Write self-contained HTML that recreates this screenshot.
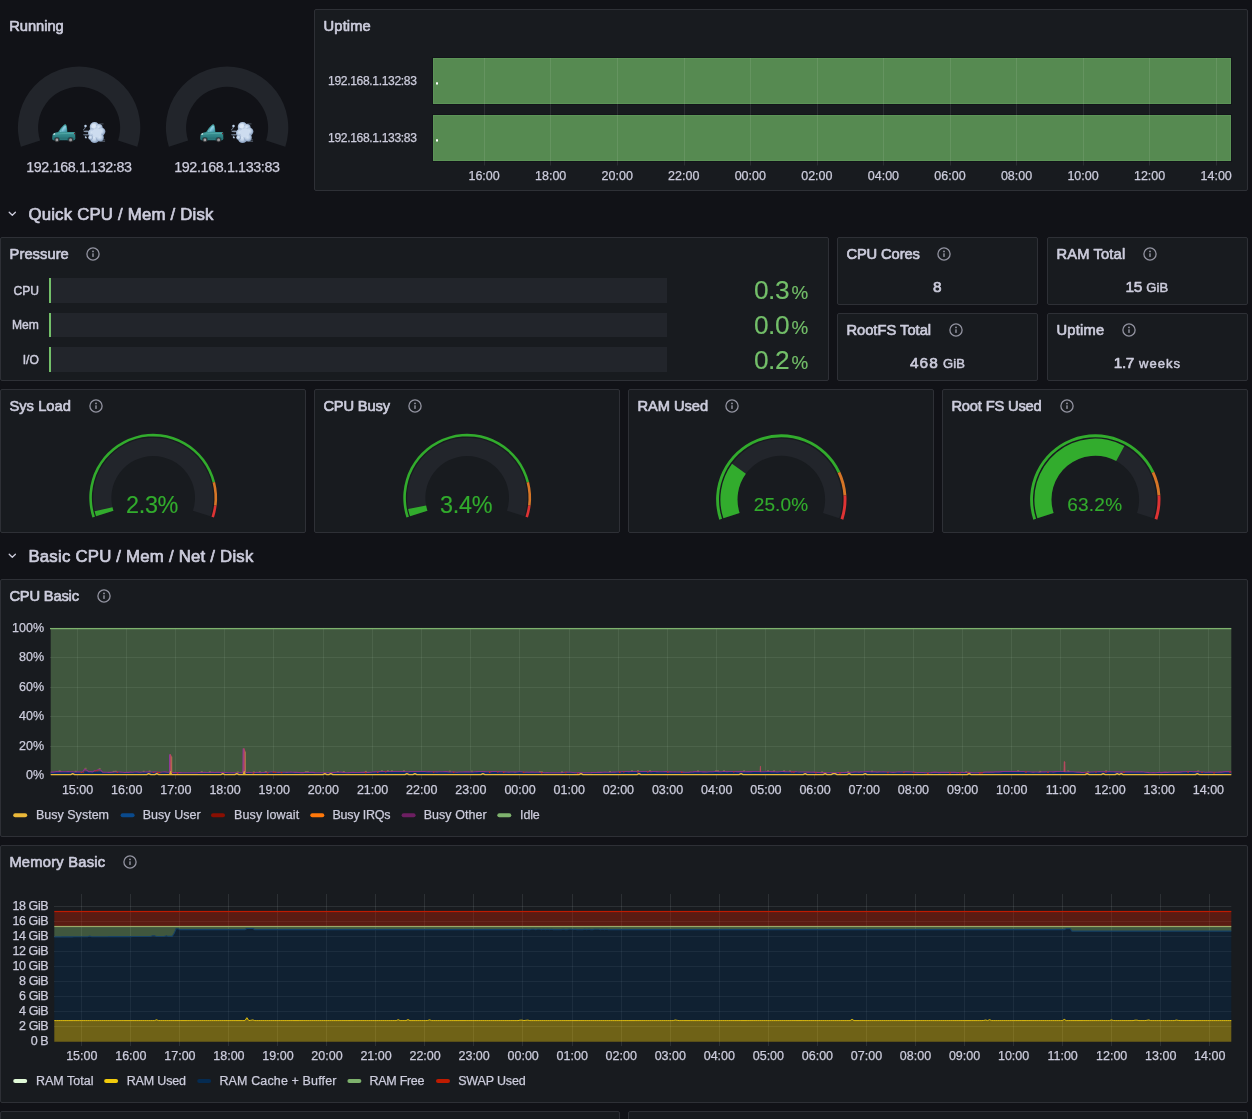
<!DOCTYPE html>
<html lang="en"><head><meta charset="utf-8"><title>Node Exporter Full</title>
<style>
html,body{margin:0;padding:0;background:#111217}
html{overflow:hidden}
body{width:1252px;height:1119px;font-family:"Liberation Sans",sans-serif;color:#ccccdc}
#root{position:relative;width:1252px;height:1119px;overflow:hidden;background:#111217}
.p{position:absolute;background:#181b1f;border:1px solid #2e3036;border-radius:2px}
.t{position:absolute;white-space:pre;display:block}
.a{position:absolute}
#v{position:absolute;left:0;top:0;will-change:transform}
</style></head><body>
<div id="root">
<div class="p" style="left:314px;top:9px;width:932px;height:180px"></div>
<div class="p" style="left:0px;top:237px;width:827px;height:142px"></div>
<div class="p" style="left:837px;top:237px;width:199px;height:66px"></div>
<div class="p" style="left:1047px;top:237px;width:199px;height:66px"></div>
<div class="p" style="left:837px;top:313px;width:199px;height:66px"></div>
<div class="p" style="left:1047px;top:313px;width:199px;height:66px"></div>
<div class="p" style="left:0px;top:389px;width:304px;height:142px"></div>
<div class="p" style="left:314px;top:389px;width:304px;height:142px"></div>
<div class="p" style="left:628px;top:389px;width:304px;height:142px"></div>
<div class="p" style="left:942px;top:389px;width:304px;height:142px"></div>
<div class="p" style="left:0px;top:579px;width:1246px;height:256px"></div>
<div class="p" style="left:0px;top:845px;width:1246px;height:256px"></div>
<div class="p" style="left:0px;top:1111px;width:618px;height:58px"></div>
<div class="p" style="left:628px;top:1111px;width:618px;height:58px"></div>
<svg id="v" width="1252" height="1119" viewBox="0 0 1252 1119">
<defs>
<linearGradient id="tb" x1="0" y1="0" x2="0" y2="1"><stop offset="0" stop-color="#4fa9a9"/><stop offset=".45" stop-color="#3f9a9b"/><stop offset=".75" stop-color="#2f8285"/><stop offset="1" stop-color="#2a767a"/></linearGradient>
<linearGradient id="tw" x1="0" y1="0" x2="1" y2="1"><stop offset="0" stop-color="#4aa3b6"/><stop offset=".5" stop-color="#8fd0e4"/><stop offset="1" stop-color="#3c8fa6"/></linearGradient>
<radialGradient id="pg" cx=".45" cy=".42" r=".6"><stop offset="0" stop-color="#d9e6f5"/><stop offset=".5" stop-color="#bccee5"/><stop offset="1" stop-color="#7d93b3"/></radialGradient>
<filter id="pf" x="-20%" y="-20%" width="140%" height="140%"><feGaussianBlur stdDeviation=".55"/></filter>
<filter id="tf" x="-10%" y="-10%" width="120%" height="120%"><feGaussianBlur stdDeviation=".28"/></filter>
</defs>
<path d="M20.90 146.71A61.20 61.20 0 1 1 137.30 146.71L118.09 140.47A41.00 41.00 0 1 0 40.11 140.47Z" fill="#22252b"/>
<path d="M168.90 146.71A61.20 61.20 0 1 1 285.30 146.71L266.09 140.47A41.00 41.00 0 1 0 188.11 140.47Z" fill="#22252b"/>
<rect x="432.5" y="57.5" width="799" height="47" fill="none" stroke="#13141a" stroke-opacity=".85" stroke-width="1"/>
<rect x="433" y="58" width="798" height="46" fill="rgb(86,138,81)"/>
<rect x="433.5" y="58.5" width="797" height="45" fill="none" stroke="rgb(92,148,87)" stroke-width="1"/>
<rect x="432.5" y="114.5" width="799" height="47" fill="none" stroke="#13141a" stroke-opacity=".85" stroke-width="1"/>
<rect x="433" y="115" width="798" height="46" fill="rgb(86,138,81)"/>
<rect x="433.5" y="115.5" width="797" height="45" fill="none" stroke="rgb(92,148,87)" stroke-width="1"/>
<rect x="484" y="58" width="1" height="107.5" fill="#fff" fill-opacity=".09"/>
<rect x="550" y="58" width="1" height="107.5" fill="#fff" fill-opacity=".09"/>
<rect x="617" y="58" width="1" height="107.5" fill="#fff" fill-opacity=".09"/>
<rect x="684" y="58" width="1" height="107.5" fill="#fff" fill-opacity=".09"/>
<rect x="750" y="58" width="1" height="107.5" fill="#fff" fill-opacity=".09"/>
<rect x="817" y="58" width="1" height="107.5" fill="#fff" fill-opacity=".09"/>
<rect x="883" y="58" width="1" height="107.5" fill="#fff" fill-opacity=".09"/>
<rect x="950" y="58" width="1" height="107.5" fill="#fff" fill-opacity=".09"/>
<rect x="1016" y="58" width="1" height="107.5" fill="#fff" fill-opacity=".09"/>
<rect x="1083" y="58" width="1" height="107.5" fill="#fff" fill-opacity=".09"/>
<rect x="1149" y="58" width="1" height="107.5" fill="#fff" fill-opacity=".09"/>
<rect x="1216" y="58" width="1" height="107.5" fill="#fff" fill-opacity=".09"/>
<rect x="436" y="82.3" width="2" height="2.2" fill="#fff"/><rect x="436" y="139.3" width="2" height="2.2" fill="#fff"/>
<path d="M9.2 212.2l3.1 3.1 3.1-3.1" fill="none" stroke="#ccccdc" stroke-width="1.3" stroke-linecap="round" stroke-linejoin="round"/>
<path d="M9.2 554.2l3.1 3.1 3.1-3.1" fill="none" stroke="#ccccdc" stroke-width="1.3" stroke-linecap="round" stroke-linejoin="round"/>
<rect x="51" y="278" width="616" height="25" fill="#22252b"/>
<rect x="49" y="278" width="2" height="25" fill="#73bf69"/>
<rect x="51" y="313" width="616" height="24" fill="#22252b"/>
<rect x="49" y="313" width="2" height="24" fill="#73bf69"/>
<rect x="51" y="347" width="616" height="25" fill="#22252b"/>
<rect x="49" y="347" width="2" height="25" fill="#73bf69"/>
<path d="M96.04 516.37A60.10 60.10 0 1 1 210.36 516.37L192.95 510.72A41.80 41.80 0 1 0 113.45 510.72Z" fill="#22252b"/>
<path d="M96.04 516.37A60.10 60.10 0 0 1 94.65 511.35L112.48 507.23A41.80 41.80 0 0 0 113.45 510.72Z" fill="rgb(50,172,45)"/>
<path d="M92.43 517.55A63.90 63.90 0 1 1 215.09 481.91L212.57 482.56A61.30 61.30 0 1 0 94.90 516.74Z" fill="rgb(50,172,45)"/>
<path d="M215.09 481.91A63.90 63.90 0 0 1 216.60 505.81L214.02 505.48A61.30 61.30 0 0 0 212.57 482.56Z" fill="rgb(214,118,39)"/>
<path d="M216.60 505.81A63.90 63.90 0 0 1 213.97 517.55L211.50 516.74A61.30 61.30 0 0 0 214.02 505.48Z" fill="rgb(222,51,52)"/>
<path d="M410.04 516.37A60.10 60.10 0 1 1 524.36 516.37L506.95 510.72A41.80 41.80 0 1 0 427.45 510.72Z" fill="#22252b"/>
<path d="M410.04 516.37A60.10 60.10 0 0 1 408.14 508.91L426.12 505.53A41.80 41.80 0 0 0 427.45 510.72Z" fill="rgb(50,172,45)"/>
<path d="M406.43 517.55A63.90 63.90 0 1 1 529.09 481.91L526.57 482.56A61.30 61.30 0 1 0 408.90 516.74Z" fill="rgb(50,172,45)"/>
<path d="M529.09 481.91A63.90 63.90 0 0 1 530.60 505.81L528.02 505.48A61.30 61.30 0 0 0 526.57 482.56Z" fill="rgb(214,118,39)"/>
<path d="M530.60 505.81A63.90 63.90 0 0 1 527.97 517.55L525.50 516.74A61.30 61.30 0 0 0 528.02 505.48Z" fill="rgb(222,51,52)"/>
<path d="M723.38 518.32A60.90 60.90 0 1 1 839.22 518.32L822.96 513.03A43.80 43.80 0 1 0 739.64 513.03Z" fill="#22252b"/>
<path d="M723.38 518.32A60.90 60.90 0 0 1 732.03 463.70L745.87 473.76A43.80 43.80 0 0 0 739.64 513.03Z" fill="rgb(50,172,45)"/>
<path d="M719.29 519.65A65.20 65.20 0 0 1 840.29 471.74L837.67 472.97A62.30 62.30 0 0 0 722.05 518.75Z" fill="rgb(50,172,45)"/>
<path d="M840.29 471.74A65.20 65.20 0 0 1 846.37 495.41L843.48 495.59A62.30 62.30 0 0 0 837.67 472.97Z" fill="rgb(214,118,39)"/>
<path d="M846.37 495.41A65.20 65.20 0 0 1 843.31 519.65L840.55 518.75A62.30 62.30 0 0 0 843.48 495.59Z" fill="rgb(222,51,52)"/>
<path d="M1037.38 518.32A60.90 60.90 0 1 1 1153.22 518.32L1136.96 513.03A43.80 43.80 0 1 0 1053.64 513.03Z" fill="#22252b"/>
<path d="M1037.38 518.32A60.90 60.90 0 0 1 1124.37 445.99L1116.21 461.01A43.80 43.80 0 0 0 1053.64 513.03Z" fill="rgb(50,172,45)"/>
<path d="M1033.29 519.65A65.20 65.20 0 0 1 1154.29 471.74L1151.67 472.97A62.30 62.30 0 0 0 1036.05 518.75Z" fill="rgb(50,172,45)"/>
<path d="M1154.29 471.74A65.20 65.20 0 0 1 1160.37 495.41L1157.48 495.59A62.30 62.30 0 0 0 1151.67 472.97Z" fill="rgb(214,118,39)"/>
<path d="M1160.37 495.41A65.20 65.20 0 0 1 1157.31 519.65L1154.55 518.75A62.30 62.30 0 0 0 1157.48 495.59Z" fill="rgb(222,51,52)"/>
<rect x="77" y="629" width="1" height="150" fill="rgb(240,250,255)" fill-opacity=".095"/>
<rect x="126" y="629" width="1" height="150" fill="rgb(240,250,255)" fill-opacity=".095"/>
<rect x="175" y="629" width="1" height="150" fill="rgb(240,250,255)" fill-opacity=".095"/>
<rect x="224" y="629" width="1" height="150" fill="rgb(240,250,255)" fill-opacity=".095"/>
<rect x="273" y="629" width="1" height="150" fill="rgb(240,250,255)" fill-opacity=".095"/>
<rect x="323" y="629" width="1" height="150" fill="rgb(240,250,255)" fill-opacity=".095"/>
<rect x="372" y="629" width="1" height="150" fill="rgb(240,250,255)" fill-opacity=".095"/>
<rect x="421" y="629" width="1" height="150" fill="rgb(240,250,255)" fill-opacity=".095"/>
<rect x="470" y="629" width="1" height="150" fill="rgb(240,250,255)" fill-opacity=".095"/>
<rect x="519" y="629" width="1" height="150" fill="rgb(240,250,255)" fill-opacity=".095"/>
<rect x="569" y="629" width="1" height="150" fill="rgb(240,250,255)" fill-opacity=".095"/>
<rect x="618" y="629" width="1" height="150" fill="rgb(240,250,255)" fill-opacity=".095"/>
<rect x="667" y="629" width="1" height="150" fill="rgb(240,250,255)" fill-opacity=".095"/>
<rect x="716" y="629" width="1" height="150" fill="rgb(240,250,255)" fill-opacity=".095"/>
<rect x="765" y="629" width="1" height="150" fill="rgb(240,250,255)" fill-opacity=".095"/>
<rect x="814" y="629" width="1" height="150" fill="rgb(240,250,255)" fill-opacity=".095"/>
<rect x="864" y="629" width="1" height="150" fill="rgb(240,250,255)" fill-opacity=".095"/>
<rect x="913" y="629" width="1" height="150" fill="rgb(240,250,255)" fill-opacity=".095"/>
<rect x="962" y="629" width="1" height="150" fill="rgb(240,250,255)" fill-opacity=".095"/>
<rect x="1011" y="629" width="1" height="150" fill="rgb(240,250,255)" fill-opacity=".095"/>
<rect x="1060" y="629" width="1" height="150" fill="rgb(240,250,255)" fill-opacity=".095"/>
<rect x="1109" y="629" width="1" height="150" fill="rgb(240,250,255)" fill-opacity=".095"/>
<rect x="1159" y="629" width="1" height="150" fill="rgb(240,250,255)" fill-opacity=".095"/>
<rect x="1208" y="629" width="1" height="150" fill="rgb(240,250,255)" fill-opacity=".095"/>
<rect x="50" y="746" width="1181.30" height="1" fill="rgb(240,250,255)" fill-opacity=".095"/>
<rect x="50" y="716" width="1181.30" height="1" fill="rgb(240,250,255)" fill-opacity=".095"/>
<rect x="50" y="687" width="1181.30" height="1" fill="rgb(240,250,255)" fill-opacity=".095"/>
<rect x="50" y="657" width="1181.30" height="1" fill="rgb(240,250,255)" fill-opacity=".095"/>
<rect x="50.7" y="628.6" width="1180.60" height="146.60" fill="rgb(126,178,109)" fill-opacity=".4"/>
<rect x="50" y="627.95" width="1181.30" height="1.3" fill="#7eb26d"/>
<polygon points="50.7,774.6 50.7,772.12 52.7,772.09 54.7,771.88 56.7,771.60 58.7,771.60 60.7,771.55 62.7,771.71 64.7,771.70 66.7,771.64 68.7,771.49 70.7,771.69 72.7,771.79 74.7,772.00 76.7,771.84 78.7,771.75 80.7,771.98 82.7,771.73 84.7,769.06 86.7,770.10 88.7,771.69 90.7,771.67 92.7,771.89 94.7,770.51 96.7,770.26 98.7,769.46 100.7,769.89 102.7,772.30 104.7,772.22 106.7,772.24 108.7,772.35 110.7,772.40 112.7,772.16 114.7,771.99 116.7,771.88 118.7,771.98 120.7,772.11 122.7,772.22 124.7,772.43 126.7,772.30 128.7,772.35 130.7,772.17 132.7,772.23 134.7,772.00 136.7,771.83 138.7,772.08 140.7,772.22 142.7,772.02 144.7,772.03 146.7,771.79 148.7,771.84 150.8,772.06 152.8,771.99 154.8,771.85 156.8,771.97 158.8,772.18 160.8,772.26 162.8,772.03 164.8,771.90 166.8,772.09 168.8,772.22 170.8,772.41 172.8,772.64 174.8,772.49 176.8,772.65 178.8,772.62 180.8,772.64 182.8,772.80 184.8,772.68 186.8,772.80 188.8,772.73 190.8,772.80 192.8,772.80 194.8,772.80 196.8,772.80 198.8,772.56 200.8,772.41 202.8,772.51 204.8,772.32 206.8,772.46 208.8,772.52 210.8,772.34 212.8,772.27 214.8,772.47 216.8,772.22 218.8,772.37 220.8,772.49 222.8,772.35 224.8,772.44 226.8,772.54 228.8,772.75 230.8,772.80 232.8,772.76 234.8,772.80 236.8,772.75 238.8,772.80 240.8,772.80 242.8,772.57 244.8,772.58 246.8,772.54 248.8,772.36 250.8,772.52 252.8,772.69 254.8,772.49 256.8,772.33 258.8,772.45 260.8,772.61 262.8,772.49 264.8,772.27 266.8,772.42 268.8,772.19 270.8,772.00 272.8,771.95 274.8,771.99 276.8,772.19 278.8,772.42 280.8,772.19 282.8,772.32 284.8,772.22 286.8,772.34 288.8,772.18 290.8,772.13 292.8,772.23 294.8,772.39 296.8,772.28 298.8,772.50 300.8,772.63 302.8,772.60 304.8,772.43 306.8,772.37 308.8,772.48 310.8,772.27 312.8,772.42 314.8,772.66 316.8,772.78 318.8,772.80 320.8,772.80 322.8,772.80 324.8,772.80 326.8,772.76 328.8,772.80 330.8,772.80 332.8,772.60 334.8,772.36 336.8,772.29 338.8,772.19 340.8,772.15 342.8,772.33 344.8,772.56 346.9,772.80 348.9,772.59 350.9,772.49 352.9,772.26 354.9,772.50 356.9,772.43 358.9,772.44 360.9,772.33 362.9,772.42 364.9,772.17 366.9,772.38 368.9,772.36 370.9,772.24 372.9,772.04 374.9,771.92 376.9,771.82 378.9,771.67 380.9,771.50 382.9,771.57 384.9,771.50 386.9,771.50 388.9,771.50 390.9,771.54 392.9,771.50 394.9,771.50 396.9,771.50 398.9,771.50 400.9,771.56 402.9,771.52 404.9,771.50 406.9,771.71 408.9,771.64 410.9,771.50 412.9,771.50 414.9,771.50 416.9,771.56 418.9,771.50 420.9,771.50 422.9,771.53 424.9,771.50 426.9,771.71 428.9,771.58 430.9,771.82 432.9,771.77 434.9,771.78 436.9,771.91 438.9,771.81 440.9,771.81 442.9,771.76 444.9,771.55 446.9,771.67 448.9,771.91 450.9,772.01 452.9,771.92 454.9,772.07 456.9,772.24 458.9,772.03 460.9,771.95 462.9,771.98 464.9,771.79 466.9,771.87 468.9,771.79 470.9,771.94 472.9,771.98 474.9,771.82 476.9,771.62 478.9,771.50 480.9,771.56 482.9,771.52 484.9,771.61 486.9,771.79 488.9,771.79 490.9,771.62 492.9,771.50 494.9,771.50 496.9,771.50 498.9,771.61 500.9,771.78 502.9,771.80 504.9,771.91 506.9,772.06 508.9,772.10 510.9,772.04 512.9,772.04 514.9,772.13 516.9,771.96 518.9,771.72 520.9,771.75 522.9,771.96 524.9,772.19 526.9,772.01 528.9,772.24 530.9,772.13 532.9,772.10 534.9,772.19 536.9,772.05 538.9,772.29 540.9,772.47 543.0,772.49 545.0,772.73 547.0,772.56 549.0,772.69 551.0,772.80 553.0,772.80 555.0,772.74 557.0,772.76 559.0,772.70 561.0,772.62 563.0,772.47 565.0,772.24 567.0,772.14 569.0,772.29 571.0,772.31 573.0,772.47 575.0,772.71 577.0,772.73 579.0,772.62 581.0,772.78 583.0,772.80 585.0,772.80 587.0,772.70 589.0,772.69 591.0,772.63 593.0,772.51 595.0,772.56 597.0,772.41 599.0,772.21 601.0,772.42 603.0,772.20 605.0,772.09 607.0,772.27 609.0,772.30 611.0,772.23 613.0,772.03 615.0,772.09 617.0,772.06 619.0,771.87 621.0,771.72 623.0,771.50 625.0,771.52 627.0,771.50 629.0,771.65 631.0,771.54 633.0,771.50 635.0,771.50 637.0,771.50 639.0,771.64 641.0,771.50 643.0,771.50 645.0,771.50 647.0,771.50 649.0,771.50 651.0,771.59 653.0,771.50 655.0,771.50 657.0,771.58 659.0,771.78 661.0,771.81 663.0,771.79 665.0,771.65 667.0,771.66 669.0,771.90 671.0,771.74 673.0,771.96 675.0,771.81 677.0,771.97 679.0,772.06 681.0,771.91 683.0,772.09 685.0,772.27 687.0,772.26 689.0,772.15 691.0,771.98 693.0,771.88 695.0,771.66 697.0,771.66 699.0,771.50 701.0,771.71 703.0,771.85 705.0,771.83 707.0,771.94 709.0,771.82 711.0,771.75 713.0,771.74 715.0,771.57 717.0,771.54 719.0,771.63 721.0,771.69 723.0,771.52 725.0,771.50 727.0,771.65 729.0,771.50 731.0,771.50 733.0,771.50 735.0,771.50 737.0,771.65 739.0,771.63 741.1,771.63 743.1,771.58 745.1,771.81 747.1,771.58 749.1,771.57 751.1,771.62 753.1,771.50 755.1,771.50 757.1,771.50 759.1,771.50 761.1,771.72 763.1,771.70 765.1,771.74 767.1,771.51 769.1,771.50 771.1,771.62 773.1,771.63 775.1,771.82 777.1,771.85 779.1,771.69 781.1,771.50 783.1,771.51 785.1,771.60 787.1,771.76 789.1,771.70 791.1,771.50 793.1,771.69 795.1,771.55 797.1,771.78 799.1,771.94 801.1,772.07 803.1,771.98 805.1,772.07 807.1,772.14 809.1,772.08 811.1,772.28 813.1,772.16 815.1,772.35 817.1,772.35 819.1,772.47 821.1,772.62 823.1,772.61 825.1,772.64 827.1,772.70 829.1,772.74 831.1,772.73 833.1,772.80 835.1,772.80 837.1,772.73 839.1,772.67 841.1,772.65 843.1,772.47 845.1,772.42 847.1,772.24 849.1,772.37 851.1,772.25 853.1,772.10 855.1,771.90 857.1,771.99 859.1,772.08 861.1,771.87 863.1,772.01 865.1,771.76 867.1,771.57 869.1,771.75 871.1,771.88 873.1,771.77 875.1,771.89 877.1,772.09 879.1,771.92 881.1,771.96 883.1,771.82 885.1,772.01 887.1,772.05 889.1,771.96 891.1,772.20 893.1,772.35 895.1,772.26 897.1,772.06 899.1,771.82 901.1,772.01 903.1,772.01 905.1,771.88 907.1,771.88 909.1,771.79 911.1,771.94 913.1,772.16 915.1,772.35 917.1,772.59 919.1,772.56 921.1,772.55 923.1,772.52 925.1,772.69 927.1,772.80 929.1,772.80 931.1,772.63 933.1,772.38 935.1,772.17 937.2,772.37 939.2,772.59 941.2,772.37 943.2,772.39 945.2,772.25 947.2,772.34 949.2,772.36 951.2,772.35 953.2,772.38 955.2,772.33 957.2,772.58 959.2,772.48 961.2,772.30 963.2,772.46 965.2,772.49 967.2,772.37 969.2,772.41 971.2,772.57 973.2,772.73 975.2,772.73 977.2,772.80 979.2,772.60 981.2,772.45 983.2,772.35 985.2,772.17 987.2,772.11 989.2,772.15 991.2,772.10 993.2,772.10 995.2,771.86 997.2,771.71 999.2,771.83 1001.2,771.62 1003.2,771.50 1005.2,771.50 1007.2,771.50 1009.2,771.55 1011.2,771.50 1013.2,771.50 1015.2,771.50 1017.2,771.50 1019.2,771.50 1021.2,771.55 1023.2,771.50 1025.2,771.71 1027.2,771.79 1029.2,771.81 1031.2,772.05 1033.2,772.13 1035.2,772.06 1037.2,771.99 1039.2,772.13 1041.2,771.91 1043.2,771.82 1045.2,771.90 1047.2,771.82 1049.2,771.79 1051.2,771.77 1053.2,771.83 1055.2,771.58 1057.2,771.51 1059.2,771.50 1061.2,771.50 1063.2,771.50 1065.2,771.74 1067.2,771.68 1069.2,771.56 1071.2,771.68 1073.2,771.73 1075.2,771.96 1077.2,772.11 1079.2,772.17 1081.2,772.37 1083.2,772.50 1085.2,772.29 1087.2,772.27 1089.2,772.27 1091.2,772.03 1093.2,772.00 1095.2,771.75 1097.2,771.68 1099.2,771.53 1101.2,771.74 1103.2,771.69 1105.2,771.56 1107.2,771.79 1109.2,771.57 1111.2,771.74 1113.2,771.76 1115.2,771.92 1117.2,771.92 1119.2,771.87 1121.2,772.09 1123.2,771.87 1125.2,771.91 1127.2,771.89 1129.2,771.84 1131.2,771.91 1133.3,772.02 1135.3,771.94 1137.3,771.91 1139.3,772.02 1141.3,771.91 1143.3,772.01 1145.3,772.26 1147.3,772.38 1149.3,772.61 1151.3,772.78 1153.3,772.66 1155.3,772.71 1157.3,772.51 1159.3,772.39 1161.3,772.61 1163.3,772.37 1165.3,772.15 1167.3,772.36 1169.3,772.16 1171.3,772.19 1173.3,772.20 1175.3,771.97 1177.3,772.09 1179.3,772.08 1181.3,771.86 1183.3,771.75 1185.3,771.77 1187.3,771.53 1189.3,771.50 1191.3,771.50 1193.3,771.69 1195.3,771.63 1197.3,771.65 1199.3,771.80 1201.3,772.02 1203.3,772.01 1205.3,772.20 1207.3,772.23 1209.3,772.14 1211.3,772.17 1213.3,772.28 1215.3,772.24 1217.3,772.28 1219.3,772.14 1221.3,772.13 1223.3,771.88 1225.3,771.65 1227.3,771.54 1229.3,771.67 1231.3,771.86 1231.3,774.6" fill="#7d3a63" fill-opacity=".55"/>
<polygon points="50.7,774.6 50.7,772.12 52.7,772.09 54.7,771.88 56.7,771.60 58.7,771.60 60.7,771.55 62.7,771.71 64.7,771.70 66.7,771.64 68.7,771.49 70.7,771.69 72.7,771.79 74.7,772.00 76.7,771.84 78.7,771.75 80.7,771.98 82.7,771.73 84.7,771.40 86.7,771.40 88.7,771.69 90.7,771.67 92.7,771.89 94.7,771.40 96.7,771.40 98.7,771.40 100.7,771.40 102.7,772.30 104.7,772.22 106.7,772.24 108.7,772.35 110.7,772.40 112.7,772.16 114.7,771.99 116.7,771.88 118.7,771.98 120.7,772.11 122.7,772.22 124.7,772.43 126.7,772.30 128.7,772.35 130.7,772.17 132.7,772.23 134.7,772.00 136.7,771.83 138.7,772.08 140.7,772.22 142.7,772.02 144.7,772.03 146.7,771.79 148.7,771.84 150.8,772.06 152.8,771.99 154.8,771.85 156.8,771.97 158.8,772.18 160.8,772.26 162.8,772.03 164.8,771.90 166.8,772.09 168.8,772.22 170.8,772.41 172.8,772.64 174.8,772.49 176.8,772.65 178.8,772.62 180.8,772.64 182.8,772.80 184.8,772.68 186.8,772.80 188.8,772.73 190.8,772.80 192.8,772.80 194.8,772.80 196.8,772.80 198.8,772.56 200.8,772.41 202.8,772.51 204.8,772.32 206.8,772.46 208.8,772.52 210.8,772.34 212.8,772.27 214.8,772.47 216.8,772.22 218.8,772.37 220.8,772.49 222.8,772.35 224.8,772.44 226.8,772.54 228.8,772.75 230.8,772.80 232.8,772.76 234.8,772.80 236.8,772.75 238.8,772.80 240.8,772.80 242.8,772.57 244.8,772.58 246.8,772.54 248.8,772.36 250.8,772.52 252.8,772.69 254.8,772.49 256.8,772.33 258.8,772.45 260.8,772.61 262.8,772.49 264.8,772.27 266.8,772.42 268.8,772.19 270.8,772.00 272.8,771.95 274.8,771.99 276.8,772.19 278.8,772.42 280.8,772.19 282.8,772.32 284.8,772.22 286.8,772.34 288.8,772.18 290.8,772.13 292.8,772.23 294.8,772.39 296.8,772.28 298.8,772.50 300.8,772.63 302.8,772.60 304.8,772.43 306.8,772.37 308.8,772.48 310.8,772.27 312.8,772.42 314.8,772.66 316.8,772.78 318.8,772.80 320.8,772.80 322.8,772.80 324.8,772.80 326.8,772.76 328.8,772.80 330.8,772.80 332.8,772.60 334.8,772.36 336.8,772.29 338.8,772.19 340.8,772.15 342.8,772.33 344.8,772.56 346.9,772.80 348.9,772.59 350.9,772.49 352.9,772.26 354.9,772.50 356.9,772.43 358.9,772.44 360.9,772.33 362.9,772.42 364.9,772.17 366.9,772.38 368.9,772.36 370.9,772.24 372.9,772.04 374.9,771.92 376.9,771.82 378.9,771.67 380.9,771.50 382.9,771.57 384.9,771.50 386.9,771.50 388.9,771.50 390.9,771.54 392.9,771.50 394.9,771.50 396.9,771.50 398.9,771.50 400.9,771.56 402.9,771.52 404.9,771.50 406.9,771.71 408.9,771.64 410.9,771.50 412.9,771.50 414.9,771.50 416.9,771.56 418.9,771.50 420.9,771.50 422.9,771.53 424.9,771.50 426.9,771.71 428.9,771.58 430.9,771.82 432.9,771.77 434.9,771.78 436.9,771.91 438.9,771.81 440.9,771.81 442.9,771.76 444.9,771.55 446.9,771.67 448.9,771.91 450.9,772.01 452.9,771.92 454.9,772.07 456.9,772.24 458.9,772.03 460.9,771.95 462.9,771.98 464.9,771.79 466.9,771.87 468.9,771.79 470.9,771.94 472.9,771.98 474.9,771.82 476.9,771.62 478.9,771.50 480.9,771.56 482.9,771.52 484.9,771.61 486.9,771.79 488.9,771.79 490.9,771.62 492.9,771.50 494.9,771.50 496.9,771.50 498.9,771.61 500.9,771.78 502.9,771.80 504.9,771.91 506.9,772.06 508.9,772.10 510.9,772.04 512.9,772.04 514.9,772.13 516.9,771.96 518.9,771.72 520.9,771.75 522.9,771.96 524.9,772.19 526.9,772.01 528.9,772.24 530.9,772.13 532.9,772.10 534.9,772.19 536.9,772.05 538.9,772.29 540.9,772.47 543.0,772.49 545.0,772.73 547.0,772.56 549.0,772.69 551.0,772.80 553.0,772.80 555.0,772.74 557.0,772.76 559.0,772.70 561.0,772.62 563.0,772.47 565.0,772.24 567.0,772.14 569.0,772.29 571.0,772.31 573.0,772.47 575.0,772.71 577.0,772.73 579.0,772.62 581.0,772.78 583.0,772.80 585.0,772.80 587.0,772.70 589.0,772.69 591.0,772.63 593.0,772.51 595.0,772.56 597.0,772.41 599.0,772.21 601.0,772.42 603.0,772.20 605.0,772.09 607.0,772.27 609.0,772.30 611.0,772.23 613.0,772.03 615.0,772.09 617.0,772.06 619.0,771.87 621.0,771.72 623.0,771.50 625.0,771.52 627.0,771.50 629.0,771.65 631.0,771.54 633.0,771.50 635.0,771.50 637.0,771.50 639.0,771.64 641.0,771.50 643.0,771.50 645.0,771.50 647.0,771.50 649.0,771.50 651.0,771.59 653.0,771.50 655.0,771.50 657.0,771.58 659.0,771.78 661.0,771.81 663.0,771.79 665.0,771.65 667.0,771.66 669.0,771.90 671.0,771.74 673.0,771.96 675.0,771.81 677.0,771.97 679.0,772.06 681.0,771.91 683.0,772.09 685.0,772.27 687.0,772.26 689.0,772.15 691.0,771.98 693.0,771.88 695.0,771.66 697.0,771.66 699.0,771.50 701.0,771.71 703.0,771.85 705.0,771.83 707.0,771.94 709.0,771.82 711.0,771.75 713.0,771.74 715.0,771.57 717.0,771.54 719.0,771.63 721.0,771.69 723.0,771.52 725.0,771.50 727.0,771.65 729.0,771.50 731.0,771.50 733.0,771.50 735.0,771.50 737.0,771.65 739.0,771.63 741.1,771.63 743.1,771.58 745.1,771.81 747.1,771.58 749.1,771.57 751.1,771.62 753.1,771.50 755.1,771.50 757.1,771.50 759.1,771.50 761.1,771.72 763.1,771.70 765.1,771.74 767.1,771.51 769.1,771.50 771.1,771.62 773.1,771.63 775.1,771.82 777.1,771.85 779.1,771.69 781.1,771.50 783.1,771.51 785.1,771.60 787.1,771.76 789.1,771.70 791.1,771.50 793.1,771.69 795.1,771.55 797.1,771.78 799.1,771.94 801.1,772.07 803.1,771.98 805.1,772.07 807.1,772.14 809.1,772.08 811.1,772.28 813.1,772.16 815.1,772.35 817.1,772.35 819.1,772.47 821.1,772.62 823.1,772.61 825.1,772.64 827.1,772.70 829.1,772.74 831.1,772.73 833.1,772.80 835.1,772.80 837.1,772.73 839.1,772.67 841.1,772.65 843.1,772.47 845.1,772.42 847.1,772.24 849.1,772.37 851.1,772.25 853.1,772.10 855.1,771.90 857.1,771.99 859.1,772.08 861.1,771.87 863.1,772.01 865.1,771.76 867.1,771.57 869.1,771.75 871.1,771.88 873.1,771.77 875.1,771.89 877.1,772.09 879.1,771.92 881.1,771.96 883.1,771.82 885.1,772.01 887.1,772.05 889.1,771.96 891.1,772.20 893.1,772.35 895.1,772.26 897.1,772.06 899.1,771.82 901.1,772.01 903.1,772.01 905.1,771.88 907.1,771.88 909.1,771.79 911.1,771.94 913.1,772.16 915.1,772.35 917.1,772.59 919.1,772.56 921.1,772.55 923.1,772.52 925.1,772.69 927.1,772.80 929.1,772.80 931.1,772.63 933.1,772.38 935.1,772.17 937.2,772.37 939.2,772.59 941.2,772.37 943.2,772.39 945.2,772.25 947.2,772.34 949.2,772.36 951.2,772.35 953.2,772.38 955.2,772.33 957.2,772.58 959.2,772.48 961.2,772.30 963.2,772.46 965.2,772.49 967.2,772.37 969.2,772.41 971.2,772.57 973.2,772.73 975.2,772.73 977.2,772.80 979.2,772.60 981.2,772.45 983.2,772.35 985.2,772.17 987.2,772.11 989.2,772.15 991.2,772.10 993.2,772.10 995.2,771.86 997.2,771.71 999.2,771.83 1001.2,771.62 1003.2,771.50 1005.2,771.50 1007.2,771.50 1009.2,771.55 1011.2,771.50 1013.2,771.50 1015.2,771.50 1017.2,771.50 1019.2,771.50 1021.2,771.55 1023.2,771.50 1025.2,771.71 1027.2,771.79 1029.2,771.81 1031.2,772.05 1033.2,772.13 1035.2,772.06 1037.2,771.99 1039.2,772.13 1041.2,771.91 1043.2,771.82 1045.2,771.90 1047.2,771.82 1049.2,771.79 1051.2,771.77 1053.2,771.83 1055.2,771.58 1057.2,771.51 1059.2,771.50 1061.2,771.50 1063.2,771.50 1065.2,771.74 1067.2,771.68 1069.2,771.56 1071.2,771.68 1073.2,771.73 1075.2,771.96 1077.2,772.11 1079.2,772.17 1081.2,772.37 1083.2,772.50 1085.2,772.29 1087.2,772.27 1089.2,772.27 1091.2,772.03 1093.2,772.00 1095.2,771.75 1097.2,771.68 1099.2,771.53 1101.2,771.74 1103.2,771.69 1105.2,771.56 1107.2,771.79 1109.2,771.57 1111.2,771.74 1113.2,771.76 1115.2,771.92 1117.2,771.92 1119.2,771.87 1121.2,772.09 1123.2,771.87 1125.2,771.91 1127.2,771.89 1129.2,771.84 1131.2,771.91 1133.3,772.02 1135.3,771.94 1137.3,771.91 1139.3,772.02 1141.3,771.91 1143.3,772.01 1145.3,772.26 1147.3,772.38 1149.3,772.61 1151.3,772.78 1153.3,772.66 1155.3,772.71 1157.3,772.51 1159.3,772.39 1161.3,772.61 1163.3,772.37 1165.3,772.15 1167.3,772.36 1169.3,772.16 1171.3,772.19 1173.3,772.20 1175.3,771.97 1177.3,772.09 1179.3,772.08 1181.3,771.86 1183.3,771.75 1185.3,771.77 1187.3,771.53 1189.3,771.50 1191.3,771.50 1193.3,771.69 1195.3,771.63 1197.3,771.65 1199.3,771.80 1201.3,772.02 1203.3,772.01 1205.3,772.20 1207.3,772.23 1209.3,772.14 1211.3,772.17 1213.3,772.28 1215.3,772.24 1217.3,772.28 1219.3,772.14 1221.3,772.13 1223.3,771.88 1225.3,771.65 1227.3,771.54 1229.3,771.67 1231.3,771.86 1231.3,774.6" fill="#0a2f66"/>
<polyline points="50.7,772.12 52.7,772.09 54.7,771.88 56.7,771.60 58.7,771.60 60.7,771.55 62.7,771.71 64.7,771.70 66.7,771.64 68.7,771.49 70.7,771.69 72.7,771.79 74.7,772.00 76.7,771.84 78.7,771.75 80.7,771.98 82.7,771.73 84.7,769.06 86.7,770.10 88.7,771.69 90.7,771.67 92.7,771.89 94.7,770.51 96.7,770.26 98.7,769.46 100.7,769.89 102.7,772.30 104.7,772.22 106.7,772.24 108.7,772.35 110.7,772.40 112.7,772.16 114.7,771.99 116.7,771.88 118.7,771.98 120.7,772.11 122.7,772.22 124.7,772.43 126.7,772.30 128.7,772.35 130.7,772.17 132.7,772.23 134.7,772.00 136.7,771.83 138.7,772.08 140.7,772.22 142.7,772.02 144.7,772.03 146.7,771.79 148.7,771.84 150.8,772.06 152.8,771.99 154.8,771.85 156.8,771.97 158.8,772.18 160.8,772.26 162.8,772.03 164.8,771.90 166.8,772.09 168.8,772.22 170.8,772.41 172.8,772.64 174.8,772.49 176.8,772.65 178.8,772.62 180.8,772.64 182.8,772.80 184.8,772.68 186.8,772.80 188.8,772.73 190.8,772.80 192.8,772.80 194.8,772.80 196.8,772.80 198.8,772.56 200.8,772.41 202.8,772.51 204.8,772.32 206.8,772.46 208.8,772.52 210.8,772.34 212.8,772.27 214.8,772.47 216.8,772.22 218.8,772.37 220.8,772.49 222.8,772.35 224.8,772.44 226.8,772.54 228.8,772.75 230.8,772.80 232.8,772.76 234.8,772.80 236.8,772.75 238.8,772.80 240.8,772.80 242.8,772.57 244.8,772.58 246.8,772.54 248.8,772.36 250.8,772.52 252.8,772.69 254.8,772.49 256.8,772.33 258.8,772.45 260.8,772.61 262.8,772.49 264.8,772.27 266.8,772.42 268.8,772.19 270.8,772.00 272.8,771.95 274.8,771.99 276.8,772.19 278.8,772.42 280.8,772.19 282.8,772.32 284.8,772.22 286.8,772.34 288.8,772.18 290.8,772.13 292.8,772.23 294.8,772.39 296.8,772.28 298.8,772.50 300.8,772.63 302.8,772.60 304.8,772.43 306.8,772.37 308.8,772.48 310.8,772.27 312.8,772.42 314.8,772.66 316.8,772.78 318.8,772.80 320.8,772.80 322.8,772.80 324.8,772.80 326.8,772.76 328.8,772.80 330.8,772.80 332.8,772.60 334.8,772.36 336.8,772.29 338.8,772.19 340.8,772.15 342.8,772.33 344.8,772.56 346.9,772.80 348.9,772.59 350.9,772.49 352.9,772.26 354.9,772.50 356.9,772.43 358.9,772.44 360.9,772.33 362.9,772.42 364.9,772.17 366.9,772.38 368.9,772.36 370.9,772.24 372.9,772.04 374.9,771.92 376.9,771.82 378.9,771.67 380.9,771.50 382.9,771.57 384.9,771.50 386.9,771.50 388.9,771.50 390.9,771.54 392.9,771.50 394.9,771.50 396.9,771.50 398.9,771.50 400.9,771.56 402.9,771.52 404.9,771.50 406.9,771.71 408.9,771.64 410.9,771.50 412.9,771.50 414.9,771.50 416.9,771.56 418.9,771.50 420.9,771.50 422.9,771.53 424.9,771.50 426.9,771.71 428.9,771.58 430.9,771.82 432.9,771.77 434.9,771.78 436.9,771.91 438.9,771.81 440.9,771.81 442.9,771.76 444.9,771.55 446.9,771.67 448.9,771.91 450.9,772.01 452.9,771.92 454.9,772.07 456.9,772.24 458.9,772.03 460.9,771.95 462.9,771.98 464.9,771.79 466.9,771.87 468.9,771.79 470.9,771.94 472.9,771.98 474.9,771.82 476.9,771.62 478.9,771.50 480.9,771.56 482.9,771.52 484.9,771.61 486.9,771.79 488.9,771.79 490.9,771.62 492.9,771.50 494.9,771.50 496.9,771.50 498.9,771.61 500.9,771.78 502.9,771.80 504.9,771.91 506.9,772.06 508.9,772.10 510.9,772.04 512.9,772.04 514.9,772.13 516.9,771.96 518.9,771.72 520.9,771.75 522.9,771.96 524.9,772.19 526.9,772.01 528.9,772.24 530.9,772.13 532.9,772.10 534.9,772.19 536.9,772.05 538.9,772.29 540.9,772.47 543.0,772.49 545.0,772.73 547.0,772.56 549.0,772.69 551.0,772.80 553.0,772.80 555.0,772.74 557.0,772.76 559.0,772.70 561.0,772.62 563.0,772.47 565.0,772.24 567.0,772.14 569.0,772.29 571.0,772.31 573.0,772.47 575.0,772.71 577.0,772.73 579.0,772.62 581.0,772.78 583.0,772.80 585.0,772.80 587.0,772.70 589.0,772.69 591.0,772.63 593.0,772.51 595.0,772.56 597.0,772.41 599.0,772.21 601.0,772.42 603.0,772.20 605.0,772.09 607.0,772.27 609.0,772.30 611.0,772.23 613.0,772.03 615.0,772.09 617.0,772.06 619.0,771.87 621.0,771.72 623.0,771.50 625.0,771.52 627.0,771.50 629.0,771.65 631.0,771.54 633.0,771.50 635.0,771.50 637.0,771.50 639.0,771.64 641.0,771.50 643.0,771.50 645.0,771.50 647.0,771.50 649.0,771.50 651.0,771.59 653.0,771.50 655.0,771.50 657.0,771.58 659.0,771.78 661.0,771.81 663.0,771.79 665.0,771.65 667.0,771.66 669.0,771.90 671.0,771.74 673.0,771.96 675.0,771.81 677.0,771.97 679.0,772.06 681.0,771.91 683.0,772.09 685.0,772.27 687.0,772.26 689.0,772.15 691.0,771.98 693.0,771.88 695.0,771.66 697.0,771.66 699.0,771.50 701.0,771.71 703.0,771.85 705.0,771.83 707.0,771.94 709.0,771.82 711.0,771.75 713.0,771.74 715.0,771.57 717.0,771.54 719.0,771.63 721.0,771.69 723.0,771.52 725.0,771.50 727.0,771.65 729.0,771.50 731.0,771.50 733.0,771.50 735.0,771.50 737.0,771.65 739.0,771.63 741.1,771.63 743.1,771.58 745.1,771.81 747.1,771.58 749.1,771.57 751.1,771.62 753.1,771.50 755.1,771.50 757.1,771.50 759.1,771.50 761.1,771.72 763.1,771.70 765.1,771.74 767.1,771.51 769.1,771.50 771.1,771.62 773.1,771.63 775.1,771.82 777.1,771.85 779.1,771.69 781.1,771.50 783.1,771.51 785.1,771.60 787.1,771.76 789.1,771.70 791.1,771.50 793.1,771.69 795.1,771.55 797.1,771.78 799.1,771.94 801.1,772.07 803.1,771.98 805.1,772.07 807.1,772.14 809.1,772.08 811.1,772.28 813.1,772.16 815.1,772.35 817.1,772.35 819.1,772.47 821.1,772.62 823.1,772.61 825.1,772.64 827.1,772.70 829.1,772.74 831.1,772.73 833.1,772.80 835.1,772.80 837.1,772.73 839.1,772.67 841.1,772.65 843.1,772.47 845.1,772.42 847.1,772.24 849.1,772.37 851.1,772.25 853.1,772.10 855.1,771.90 857.1,771.99 859.1,772.08 861.1,771.87 863.1,772.01 865.1,771.76 867.1,771.57 869.1,771.75 871.1,771.88 873.1,771.77 875.1,771.89 877.1,772.09 879.1,771.92 881.1,771.96 883.1,771.82 885.1,772.01 887.1,772.05 889.1,771.96 891.1,772.20 893.1,772.35 895.1,772.26 897.1,772.06 899.1,771.82 901.1,772.01 903.1,772.01 905.1,771.88 907.1,771.88 909.1,771.79 911.1,771.94 913.1,772.16 915.1,772.35 917.1,772.59 919.1,772.56 921.1,772.55 923.1,772.52 925.1,772.69 927.1,772.80 929.1,772.80 931.1,772.63 933.1,772.38 935.1,772.17 937.2,772.37 939.2,772.59 941.2,772.37 943.2,772.39 945.2,772.25 947.2,772.34 949.2,772.36 951.2,772.35 953.2,772.38 955.2,772.33 957.2,772.58 959.2,772.48 961.2,772.30 963.2,772.46 965.2,772.49 967.2,772.37 969.2,772.41 971.2,772.57 973.2,772.73 975.2,772.73 977.2,772.80 979.2,772.60 981.2,772.45 983.2,772.35 985.2,772.17 987.2,772.11 989.2,772.15 991.2,772.10 993.2,772.10 995.2,771.86 997.2,771.71 999.2,771.83 1001.2,771.62 1003.2,771.50 1005.2,771.50 1007.2,771.50 1009.2,771.55 1011.2,771.50 1013.2,771.50 1015.2,771.50 1017.2,771.50 1019.2,771.50 1021.2,771.55 1023.2,771.50 1025.2,771.71 1027.2,771.79 1029.2,771.81 1031.2,772.05 1033.2,772.13 1035.2,772.06 1037.2,771.99 1039.2,772.13 1041.2,771.91 1043.2,771.82 1045.2,771.90 1047.2,771.82 1049.2,771.79 1051.2,771.77 1053.2,771.83 1055.2,771.58 1057.2,771.51 1059.2,771.50 1061.2,771.50 1063.2,771.50 1065.2,771.74 1067.2,771.68 1069.2,771.56 1071.2,771.68 1073.2,771.73 1075.2,771.96 1077.2,772.11 1079.2,772.17 1081.2,772.37 1083.2,772.50 1085.2,772.29 1087.2,772.27 1089.2,772.27 1091.2,772.03 1093.2,772.00 1095.2,771.75 1097.2,771.68 1099.2,771.53 1101.2,771.74 1103.2,771.69 1105.2,771.56 1107.2,771.79 1109.2,771.57 1111.2,771.74 1113.2,771.76 1115.2,771.92 1117.2,771.92 1119.2,771.87 1121.2,772.09 1123.2,771.87 1125.2,771.91 1127.2,771.89 1129.2,771.84 1131.2,771.91 1133.3,772.02 1135.3,771.94 1137.3,771.91 1139.3,772.02 1141.3,771.91 1143.3,772.01 1145.3,772.26 1147.3,772.38 1149.3,772.61 1151.3,772.78 1153.3,772.66 1155.3,772.71 1157.3,772.51 1159.3,772.39 1161.3,772.61 1163.3,772.37 1165.3,772.15 1167.3,772.36 1169.3,772.16 1171.3,772.19 1173.3,772.20 1175.3,771.97 1177.3,772.09 1179.3,772.08 1181.3,771.86 1183.3,771.75 1185.3,771.77 1187.3,771.53 1189.3,771.50 1191.3,771.50 1193.3,771.69 1195.3,771.63 1197.3,771.65 1199.3,771.80 1201.3,772.02 1203.3,772.01 1205.3,772.20 1207.3,772.23 1209.3,772.14 1211.3,772.17 1213.3,772.28 1215.3,772.24 1217.3,772.28 1219.3,772.14 1221.3,772.13 1223.3,771.88 1225.3,771.65 1227.3,771.54 1229.3,771.67 1231.3,771.86" fill="none" stroke="#8c3086" stroke-width="1.1"/>
<path d="M80.7 772.48h1.5M82.7 772.23h1.5M94.7 771.01h1.5M96.7 770.76h1.5M116.7 772.38h1.5M152.8 772.49h1.5M156.8 772.47h1.5M158.8 772.68h1.5M170.8 772.91h1.5M176.8 773.15h1.5M252.8 773.19h1.5M266.8 772.92h1.5M272.8 772.45h1.5M274.8 772.49h1.5M280.8 772.69h1.5M364.9 772.67h1.5M376.9 772.32h1.5M384.9 772.00h1.5M432.9 772.27h1.5M452.9 772.42h1.5M488.9 772.29h1.5M496.9 772.00h1.5M502.9 772.30h1.5M522.9 772.46h1.5M540.9 772.97h1.5M565.0 772.74h1.5M577.0 773.23h1.5M619.0 772.37h1.5M623.0 772.00h1.5M637.0 772.00h1.5M647.0 772.00h1.5M667.0 772.16h1.5M681.0 772.41h1.5M733.0 772.00h1.5M791.1 772.00h1.5M793.1 772.19h1.5M815.1 772.85h1.5M839.1 773.17h1.5M887.1 772.55h1.5M903.1 772.51h1.5M913.1 772.66h1.5M927.1 773.30h1.5M949.2 772.86h1.5M959.2 772.98h1.5M967.2 772.87h1.5M979.2 773.10h1.5M981.2 772.95h1.5M1025.2 772.21h1.5M1047.2 772.32h1.5M1085.2 772.79h1.5M1095.2 772.25h1.5M1105.2 772.06h1.5M1123.2 772.37h1.5M1187.3 772.03h1.5M1201.3 772.52h1.5M1213.3 772.78h1.5M1229.3 772.17h1.5" stroke="#c2271a" stroke-width="1.2" fill="none"/>
<path d="M58.7 770.80h2M74.7 771.20h2M84.7 768.26h2M98.7 768.66h2M112.7 771.36h2M114.7 771.19h2M142.7 771.22h2M148.7 771.04h2M200.8 771.61h2M208.8 771.72h2M236.8 771.95h2M242.8 771.77h2M252.8 771.89h2M258.8 771.65h2M264.8 771.47h2M304.8 771.63h2M306.8 771.57h2M336.8 771.49h2M342.8 771.53h2M364.9 771.37h2M380.9 770.70h2M386.9 770.70h2M390.9 770.74h2M402.9 770.72h2M448.9 771.11h2M470.9 771.14h2M538.9 771.49h2M540.9 771.67h2M561.0 771.82h2M609.0 771.50h2M631.0 770.74h2M637.0 770.70h2M649.0 770.70h2M697.0 770.86h2M715.0 770.77h2M717.0 770.74h2M723.0 770.72h2M743.1 770.78h2M767.1 770.71h2M773.1 770.83h2M783.1 770.71h2M789.1 770.90h2M821.1 771.82h2M847.1 771.44h2M871.1 771.08h2M965.2 771.69h2M1017.2 770.70h2M1039.2 771.33h2M1067.2 770.88h2M1087.2 771.47h2M1105.2 770.76h2M1197.3 770.85h2" stroke="#b08a52" stroke-width=".8" stroke-opacity=".7" fill="none"/>
<polyline points="50.7,774.6 50.7,774.60 52.7,774.60 54.7,774.60 56.7,774.60 58.7,774.60 60.7,774.60 62.7,774.60 64.7,774.60 66.7,774.60 68.7,774.60 70.7,774.60 72.7,773.60 74.7,774.60 76.7,774.60 78.7,774.60 80.7,774.60 82.7,774.60 84.7,774.60 86.7,774.60 88.7,774.60 90.7,774.60 92.7,774.60 94.7,774.60 96.7,774.60 98.7,774.60 100.7,774.60 102.7,774.60 104.7,774.60 106.7,774.60 108.7,774.60 110.7,774.60 112.7,774.60 114.7,774.60 116.7,774.60 118.7,774.60 120.7,774.60 122.7,774.60 124.7,774.60 126.7,774.60 128.7,774.60 130.7,774.60 132.7,774.60 134.7,774.60 136.7,774.60 138.7,774.60 140.7,774.60 142.7,774.60 144.7,774.60 146.7,774.60 148.7,773.60 150.8,774.60 152.8,774.60 154.8,774.60 156.8,773.60 158.8,774.60 160.8,774.60 162.8,774.60 164.8,774.60 166.8,774.60 168.8,774.60 170.8,774.60 172.8,774.60 174.8,774.60 176.8,774.60 178.8,774.60 180.8,774.60 182.8,774.60 184.8,774.60 186.8,774.60 188.8,774.60 190.8,774.60 192.8,774.60 194.8,774.60 196.8,774.60 198.8,774.60 200.8,774.60 202.8,774.60 204.8,774.60 206.8,774.60 208.8,774.60 210.8,774.60 212.8,774.60 214.8,774.60 216.8,774.60 218.8,774.60 220.8,774.60 222.8,773.60 224.8,774.60 226.8,774.60 228.8,774.60 230.8,774.60 232.8,774.60 234.8,774.60 236.8,773.60 238.8,774.60 240.8,774.60 242.8,774.60 244.8,774.60 246.8,774.60 248.8,774.60 250.8,774.60 252.8,774.60 254.8,774.60 256.8,774.60 258.8,774.60 260.8,774.60 262.8,774.60 264.8,774.60 266.8,774.60 268.8,774.60 270.8,774.60 272.8,774.60 274.8,774.60 276.8,774.60 278.8,774.60 280.8,774.60 282.8,774.60 284.8,774.60 286.8,774.60 288.8,774.60 290.8,774.60 292.8,774.60 294.8,774.60 296.8,774.60 298.8,774.60 300.8,774.60 302.8,774.60 304.8,774.60 306.8,774.60 308.8,774.60 310.8,774.60 312.8,774.60 314.8,774.60 316.8,774.60 318.8,774.60 320.8,774.60 322.8,774.60 324.8,773.60 326.8,774.60 328.8,774.60 330.8,773.60 332.8,774.60 334.8,774.60 336.8,774.60 338.8,774.60 340.8,774.60 342.8,774.60 344.8,774.60 346.9,774.60 348.9,774.60 350.9,774.60 352.9,774.60 354.9,774.60 356.9,774.60 358.9,774.60 360.9,774.60 362.9,774.60 364.9,774.60 366.9,774.60 368.9,774.60 370.9,774.60 372.9,774.60 374.9,774.60 376.9,774.60 378.9,774.60 380.9,774.60 382.9,774.60 384.9,774.60 386.9,774.60 388.9,774.60 390.9,774.60 392.9,774.60 394.9,774.60 396.9,774.60 398.9,774.60 400.9,774.60 402.9,774.60 404.9,774.60 406.9,773.60 408.9,774.60 410.9,774.60 412.9,774.60 414.9,773.60 416.9,774.60 418.9,774.60 420.9,774.60 422.9,774.60 424.9,774.60 426.9,774.60 428.9,774.60 430.9,774.60 432.9,774.60 434.9,774.60 436.9,774.60 438.9,774.60 440.9,774.60 442.9,774.60 444.9,774.60 446.9,774.60 448.9,774.60 450.9,774.60 452.9,774.60 454.9,774.60 456.9,774.60 458.9,774.60 460.9,774.60 462.9,774.60 464.9,774.60 466.9,774.60 468.9,774.60 470.9,774.60 472.9,774.60 474.9,774.60 476.9,774.60 478.9,774.60 480.9,774.60 482.9,773.60 484.9,774.60 486.9,774.60 488.9,774.60 490.9,774.60 492.9,774.60 494.9,774.60 496.9,774.60 498.9,774.60 500.9,774.60 502.9,774.60 504.9,774.60 506.9,774.60 508.9,774.60 510.9,774.60 512.9,774.60 514.9,774.60 516.9,774.60 518.9,774.60 520.9,774.60 522.9,774.60 524.9,774.60 526.9,774.60 528.9,774.60 530.9,774.60 532.9,774.60 534.9,774.60 536.9,774.60 538.9,774.60 540.9,774.60 543.0,774.60 545.0,774.60 547.0,774.60 549.0,774.60 551.0,774.60 553.0,774.60 555.0,774.60 557.0,774.60 559.0,774.60 561.0,774.60 563.0,774.60 565.0,774.60 567.0,774.60 569.0,774.60 571.0,774.60 573.0,774.60 575.0,774.60 577.0,774.60 579.0,774.60 581.0,773.60 583.0,774.60 585.0,774.60 587.0,774.60 589.0,774.60 591.0,774.60 593.0,774.60 595.0,774.60 597.0,774.60 599.0,774.60 601.0,774.60 603.0,774.60 605.0,774.60 607.0,774.60 609.0,774.60 611.0,774.60 613.0,774.60 615.0,774.60 617.0,774.60 619.0,774.60 621.0,774.60 623.0,774.60 625.0,774.60 627.0,774.60 629.0,774.60 631.0,774.60 633.0,774.60 635.0,774.60 637.0,774.60 639.0,773.60 641.0,774.60 643.0,774.60 645.0,774.60 647.0,774.60 649.0,774.60 651.0,774.60 653.0,774.60 655.0,774.60 657.0,774.60 659.0,774.60 661.0,774.60 663.0,774.60 665.0,774.60 667.0,774.60 669.0,774.60 671.0,774.60 673.0,774.60 675.0,774.60 677.0,774.60 679.0,774.60 681.0,774.60 683.0,774.60 685.0,774.60 687.0,774.60 689.0,774.60 691.0,774.60 693.0,774.60 695.0,774.60 697.0,774.60 699.0,774.60 701.0,774.60 703.0,774.60 705.0,774.60 707.0,774.60 709.0,774.60 711.0,774.60 713.0,774.60 715.0,774.60 717.0,774.60 719.0,774.60 721.0,774.60 723.0,774.60 725.0,774.60 727.0,774.60 729.0,774.60 731.0,774.60 733.0,774.60 735.0,774.60 737.0,774.60 739.0,774.60 741.1,773.60 743.1,774.60 745.1,774.60 747.1,774.60 749.1,774.60 751.1,774.60 753.1,774.60 755.1,774.60 757.1,774.60 759.1,774.60 761.1,774.60 763.1,774.60 765.1,774.60 767.1,774.60 769.1,774.60 771.1,774.60 773.1,774.60 775.1,774.60 777.1,774.60 779.1,774.60 781.1,774.60 783.1,774.60 785.1,774.60 787.1,774.60 789.1,774.60 791.1,774.60 793.1,774.60 795.1,774.60 797.1,774.60 799.1,774.60 801.1,774.60 803.1,774.60 805.1,773.60 807.1,774.60 809.1,774.60 811.1,774.60 813.1,774.60 815.1,774.60 817.1,774.60 819.1,774.60 821.1,774.60 823.1,774.60 825.1,773.60 827.1,774.60 829.1,774.60 831.1,774.60 833.1,773.60 835.1,773.60 837.1,774.60 839.1,774.60 841.1,774.60 843.1,774.60 845.1,774.60 847.1,774.60 849.1,773.60 851.1,774.60 853.1,774.60 855.1,774.60 857.1,774.60 859.1,774.60 861.1,774.60 863.1,774.60 865.1,773.60 867.1,774.60 869.1,774.60 871.1,774.60 873.1,774.60 875.1,774.60 877.1,774.60 879.1,774.60 881.1,774.60 883.1,774.60 885.1,774.60 887.1,774.60 889.1,774.60 891.1,774.60 893.1,774.60 895.1,774.60 897.1,774.60 899.1,774.60 901.1,774.60 903.1,774.60 905.1,774.60 907.1,774.60 909.1,774.60 911.1,774.60 913.1,774.60 915.1,774.60 917.1,774.60 919.1,774.60 921.1,774.60 923.1,774.60 925.1,774.60 927.1,774.60 929.1,774.60 931.1,774.60 933.1,774.60 935.1,774.60 937.2,774.60 939.2,774.60 941.2,774.60 943.2,774.60 945.2,774.60 947.2,774.60 949.2,774.60 951.2,774.60 953.2,774.60 955.2,774.60 957.2,774.60 959.2,774.60 961.2,774.60 963.2,774.60 965.2,774.60 967.2,774.60 969.2,773.60 971.2,774.60 973.2,774.60 975.2,774.60 977.2,774.60 979.2,774.60 981.2,774.60 983.2,774.60 985.2,774.60 987.2,774.60 989.2,774.60 991.2,774.60 993.2,774.60 995.2,774.60 997.2,774.60 999.2,774.60 1001.2,774.60 1003.2,774.60 1005.2,774.60 1007.2,774.60 1009.2,774.60 1011.2,774.60 1013.2,774.60 1015.2,774.60 1017.2,774.60 1019.2,774.60 1021.2,774.60 1023.2,774.60 1025.2,774.60 1027.2,774.60 1029.2,774.60 1031.2,774.60 1033.2,774.60 1035.2,774.60 1037.2,774.60 1039.2,774.60 1041.2,774.60 1043.2,774.60 1045.2,774.60 1047.2,774.60 1049.2,774.60 1051.2,774.60 1053.2,774.60 1055.2,774.60 1057.2,774.60 1059.2,774.60 1061.2,774.60 1063.2,774.60 1065.2,774.60 1067.2,774.60 1069.2,774.60 1071.2,774.60 1073.2,774.60 1075.2,774.60 1077.2,774.60 1079.2,774.60 1081.2,774.60 1083.2,774.60 1085.2,774.60 1087.2,773.60 1089.2,774.60 1091.2,774.60 1093.2,774.60 1095.2,774.60 1097.2,774.60 1099.2,774.60 1101.2,774.60 1103.2,773.60 1105.2,774.60 1107.2,774.60 1109.2,774.60 1111.2,774.60 1113.2,774.60 1115.2,774.60 1117.2,773.60 1119.2,774.60 1121.2,773.60 1123.2,774.60 1125.2,774.60 1127.2,774.60 1129.2,774.60 1131.2,774.60 1133.3,774.60 1135.3,774.60 1137.3,774.60 1139.3,774.60 1141.3,774.60 1143.3,774.60 1145.3,774.60 1147.3,774.60 1149.3,774.60 1151.3,774.60 1153.3,774.60 1155.3,774.60 1157.3,774.60 1159.3,774.60 1161.3,774.60 1163.3,774.60 1165.3,774.60 1167.3,774.60 1169.3,774.60 1171.3,774.60 1173.3,774.60 1175.3,774.60 1177.3,774.60 1179.3,774.60 1181.3,774.60 1183.3,774.60 1185.3,774.60 1187.3,774.60 1189.3,774.60 1191.3,774.60 1193.3,774.60 1195.3,774.60 1197.3,773.60 1199.3,774.60 1201.3,774.60 1203.3,774.60 1205.3,774.60 1207.3,774.60 1209.3,774.60 1211.3,774.60 1213.3,774.60 1215.3,774.60 1217.3,774.60 1219.3,774.60 1221.3,774.60 1223.3,774.60 1225.3,774.60 1227.3,774.60 1229.3,774.60 1231.3,774.60" fill="none" stroke="#eab839" stroke-width="1.25" stroke-linejoin="round"/>
<path d="M169.0 772L169.4 754.6L170.7 754.0L171.7 756.2L172.1 772Z" fill="#b5485f"/>
<path d="M169.5 772V754.5" stroke="#8c3a9a" stroke-width="1" fill="none"/>
<path d="M171.8 772V756.7" stroke="#b98a4e" stroke-width=".7" fill="none"/>
<path d="M168.9 774.6L170.2 771.0L171.0 771L172.3 774.6Z" fill="#d9a834"/>
<path d="M242.6 772L243.0 748.6L244.3 748.0L245.3 750.9L245.7 772Z" fill="#b5485f"/>
<path d="M243.1 772V748.5" stroke="#8c3a9a" stroke-width="1" fill="none"/>
<path d="M245.4 772V751.6" stroke="#b98a4e" stroke-width=".7" fill="none"/>
<path d="M242.5 774.6L243.8 771.0L244.6 771L245.9 774.6Z" fill="#d9a834"/>
<path d="M759.7 772L759.9 766.3L760.5 765.7L760.9 766.5L761.1 772Z" fill="#b5485f"/>
<path d="M1063.6 772L1063.8 761.6L1064.6 761.0L1065.2 762.3L1065.5 772Z" fill="#b5485f"/>
<rect x="13.2" y="813.2" width="14" height="4" rx="2" fill="#eab839"/>
<rect x="120.6" y="813.2" width="14" height="4" rx="2" fill="#0a4a8c"/>
<rect x="211" y="813.2" width="14" height="4" rx="2" fill="#890f02"/>
<rect x="310.3" y="813.2" width="14" height="4" rx="2" fill="#ff780a"/>
<rect x="401.6" y="813.2" width="14" height="4" rx="2" fill="#6d1f62"/>
<rect x="497.3" y="813.2" width="14" height="4" rx="2" fill="#7eb26d"/>
<rect x="81" y="894" width="1" height="152" fill="rgb(240,250,255)" fill-opacity=".095"/>
<rect x="130" y="894" width="1" height="152" fill="rgb(240,250,255)" fill-opacity=".095"/>
<rect x="179" y="894" width="1" height="152" fill="rgb(240,250,255)" fill-opacity=".095"/>
<rect x="228" y="894" width="1" height="152" fill="rgb(240,250,255)" fill-opacity=".095"/>
<rect x="277" y="894" width="1" height="152" fill="rgb(240,250,255)" fill-opacity=".095"/>
<rect x="326" y="894" width="1" height="152" fill="rgb(240,250,255)" fill-opacity=".095"/>
<rect x="375" y="894" width="1" height="152" fill="rgb(240,250,255)" fill-opacity=".095"/>
<rect x="424" y="894" width="1" height="152" fill="rgb(240,250,255)" fill-opacity=".095"/>
<rect x="473" y="894" width="1" height="152" fill="rgb(240,250,255)" fill-opacity=".095"/>
<rect x="522" y="894" width="1" height="152" fill="rgb(240,250,255)" fill-opacity=".095"/>
<rect x="572" y="894" width="1" height="152" fill="rgb(240,250,255)" fill-opacity=".095"/>
<rect x="621" y="894" width="1" height="152" fill="rgb(240,250,255)" fill-opacity=".095"/>
<rect x="670" y="894" width="1" height="152" fill="rgb(240,250,255)" fill-opacity=".095"/>
<rect x="719" y="894" width="1" height="152" fill="rgb(240,250,255)" fill-opacity=".095"/>
<rect x="768" y="894" width="1" height="152" fill="rgb(240,250,255)" fill-opacity=".095"/>
<rect x="817" y="894" width="1" height="152" fill="rgb(240,250,255)" fill-opacity=".095"/>
<rect x="866" y="894" width="1" height="152" fill="rgb(240,250,255)" fill-opacity=".095"/>
<rect x="915" y="894" width="1" height="152" fill="rgb(240,250,255)" fill-opacity=".095"/>
<rect x="964" y="894" width="1" height="152" fill="rgb(240,250,255)" fill-opacity=".095"/>
<rect x="1013" y="894" width="1" height="152" fill="rgb(240,250,255)" fill-opacity=".095"/>
<rect x="1062" y="894" width="1" height="152" fill="rgb(240,250,255)" fill-opacity=".095"/>
<rect x="1111" y="894" width="1" height="152" fill="rgb(240,250,255)" fill-opacity=".095"/>
<rect x="1160" y="894" width="1" height="152" fill="rgb(240,250,255)" fill-opacity=".095"/>
<rect x="1209" y="894" width="1" height="152" fill="rgb(240,250,255)" fill-opacity=".095"/>
<rect x="54" y="1026" width="1177.30" height="1" fill="rgb(240,250,255)" fill-opacity=".095"/>
<rect x="54" y="1011" width="1177.30" height="1" fill="rgb(240,250,255)" fill-opacity=".095"/>
<rect x="54" y="996" width="1177.30" height="1" fill="rgb(240,250,255)" fill-opacity=".095"/>
<rect x="54" y="981" width="1177.30" height="1" fill="rgb(240,250,255)" fill-opacity=".095"/>
<rect x="54" y="966" width="1177.30" height="1" fill="rgb(240,250,255)" fill-opacity=".095"/>
<rect x="54" y="951" width="1177.30" height="1" fill="rgb(240,250,255)" fill-opacity=".095"/>
<rect x="54" y="936" width="1177.30" height="1" fill="rgb(240,250,255)" fill-opacity=".095"/>
<rect x="54" y="921" width="1177.30" height="1" fill="rgb(240,250,255)" fill-opacity=".095"/>
<rect x="54" y="906" width="1177.30" height="1" fill="rgb(240,250,255)" fill-opacity=".095"/>
<rect x="54.3" y="911.5" width="1177.00" height="15.00" fill="#bf1b00" fill-opacity=".4"/>
<polygon points="54.3,926.5 1231.3,926.5 1231.3,931.10 1229.3,931.10 1227.4,931.10 1225.4,931.10 1223.4,931.10 1221.5,931.10 1219.5,931.10 1217.5,931.10 1215.6,931.10 1213.6,931.10 1211.7,931.10 1209.7,931.10 1207.7,931.10 1205.8,931.10 1203.8,931.10 1201.8,931.10 1199.9,931.10 1197.9,931.10 1195.9,931.10 1194.0,931.10 1192.0,931.10 1190.0,931.10 1188.1,931.10 1186.1,931.10 1184.1,931.10 1182.2,931.10 1180.2,931.10 1178.2,931.10 1176.3,931.10 1174.3,931.10 1172.4,931.10 1170.4,931.10 1168.4,931.10 1166.5,931.10 1164.5,931.10 1162.5,931.10 1160.6,931.10 1158.6,931.10 1156.6,931.10 1154.7,931.10 1152.7,931.10 1150.7,931.10 1148.8,931.10 1146.8,931.10 1144.8,931.10 1142.9,931.10 1140.9,931.10 1138.9,931.10 1137.0,931.10 1135.0,931.10 1133.1,931.10 1131.1,931.10 1129.1,931.10 1127.2,931.10 1125.2,931.10 1123.2,931.10 1121.3,931.10 1119.3,931.10 1117.3,931.10 1115.4,931.10 1113.4,931.10 1111.4,931.10 1109.5,931.10 1107.5,931.10 1105.5,931.10 1103.6,931.10 1101.6,931.10 1099.6,931.10 1097.7,931.10 1095.7,931.10 1093.8,931.10 1091.8,931.10 1089.8,931.10 1087.9,931.10 1085.9,931.10 1083.9,931.10 1082.0,931.10 1080.0,931.10 1078.0,931.10 1076.1,931.10 1074.1,931.10 1072.1,931.10 1070.2,928.70 1068.2,928.70 1066.2,928.70 1064.3,929.60 1062.3,929.60 1060.4,929.60 1058.4,929.60 1056.4,929.60 1054.5,929.60 1052.5,929.60 1050.5,929.60 1048.6,929.60 1046.6,929.60 1044.6,929.60 1042.7,929.60 1040.7,929.60 1038.7,929.60 1036.8,929.60 1034.8,929.60 1032.8,929.60 1030.9,929.60 1028.9,929.60 1026.9,929.60 1025.0,929.60 1023.0,929.60 1021.1,929.60 1019.1,929.60 1017.1,929.60 1015.2,929.60 1013.2,929.60 1011.2,929.60 1009.3,929.60 1007.3,929.60 1005.3,929.60 1003.4,929.60 1001.4,929.60 999.4,929.60 997.5,929.60 995.5,929.60 993.5,929.60 991.6,929.60 989.6,929.60 987.6,929.60 985.7,929.60 983.7,929.60 981.8,929.60 979.8,929.60 977.8,929.60 975.9,929.60 973.9,929.60 971.9,929.60 970.0,929.60 968.0,929.60 966.0,929.60 964.1,929.60 962.1,929.60 960.1,929.60 958.2,929.60 956.2,929.60 954.2,929.60 952.3,929.60 950.3,929.60 948.3,929.60 946.4,929.60 944.4,929.60 942.5,929.60 940.5,929.60 938.5,929.60 936.6,929.60 934.6,929.60 932.6,929.60 930.7,929.60 928.7,929.60 926.7,929.60 924.8,929.60 922.8,929.60 920.8,929.60 918.9,929.60 916.9,929.60 914.9,929.60 913.0,929.60 911.0,929.60 909.0,929.60 907.1,929.60 905.1,929.60 903.2,929.60 901.2,929.60 899.2,929.60 897.3,929.60 895.3,929.60 893.3,929.60 891.4,929.60 889.4,929.60 887.4,929.60 885.5,929.60 883.5,929.60 881.5,929.60 879.6,929.60 877.6,929.60 875.6,929.60 873.7,929.60 871.7,929.60 869.8,929.60 867.8,929.60 865.8,929.60 863.9,929.60 861.9,929.60 859.9,929.60 858.0,929.60 856.0,929.60 854.0,929.60 852.1,929.60 850.1,929.60 848.1,929.60 846.2,929.60 844.2,929.60 842.2,929.60 840.3,929.60 838.3,929.60 836.3,929.60 834.4,929.60 832.4,929.60 830.5,929.60 828.5,929.60 826.5,929.60 824.6,929.60 822.6,929.60 820.6,929.60 818.7,929.60 816.7,929.60 814.7,929.60 812.8,929.60 810.8,929.60 808.8,929.60 806.9,929.60 804.9,929.60 802.9,929.60 801.0,929.60 799.0,929.60 797.0,929.60 795.1,929.60 793.1,929.60 791.2,929.60 789.2,929.60 787.2,929.60 785.3,929.60 783.3,929.60 781.3,929.60 779.4,929.60 777.4,929.60 775.4,929.60 773.5,929.60 771.5,929.60 769.5,929.60 767.6,929.60 765.6,929.60 763.6,929.60 761.7,929.60 759.7,929.60 757.7,929.60 755.8,929.60 753.8,929.60 751.9,929.60 749.9,929.60 747.9,929.60 746.0,929.60 744.0,929.60 742.0,929.60 740.1,929.60 738.1,929.60 736.1,929.60 734.2,929.60 732.2,929.60 730.2,929.60 728.3,929.60 726.3,929.60 724.3,929.60 722.4,929.60 720.4,929.60 718.5,929.60 716.5,929.60 714.5,929.60 712.6,929.60 710.6,929.60 708.6,929.60 706.7,929.60 704.7,929.60 702.7,929.60 700.8,929.60 698.8,929.60 696.8,929.60 694.9,929.60 692.9,929.60 690.9,929.60 689.0,929.60 687.0,929.60 685.0,929.60 683.1,929.60 681.1,929.60 679.2,929.60 677.2,929.60 675.2,929.60 673.3,929.60 671.3,929.60 669.3,929.60 667.4,929.60 665.4,929.60 663.4,929.60 661.5,929.60 659.5,929.60 657.5,929.60 655.6,929.60 653.6,929.60 651.6,929.60 649.7,929.60 647.7,929.60 645.7,929.60 643.8,929.60 641.8,929.60 639.9,929.60 637.9,929.60 635.9,929.60 634.0,929.60 632.0,929.60 630.0,929.60 628.1,929.60 626.1,929.60 624.1,929.60 622.2,929.60 620.2,929.60 618.2,929.60 616.3,929.60 614.3,929.60 612.3,929.60 610.4,929.60 608.4,929.60 606.4,929.25 604.5,929.60 602.5,929.25 600.6,929.60 598.6,929.25 596.6,929.25 594.7,929.25 592.7,929.60 590.7,929.60 588.8,929.25 586.8,929.60 584.8,929.25 582.9,929.60 580.9,929.60 578.9,929.60 577.0,929.60 575.0,929.25 573.0,929.60 571.1,929.25 569.1,929.25 567.1,929.60 565.2,929.60 563.2,929.25 561.3,929.60 559.3,929.60 557.3,929.60 555.4,929.60 553.4,929.60 551.4,929.25 549.5,929.60 547.5,929.25 545.5,929.60 543.6,929.25 541.6,929.60 539.6,929.25 537.7,929.25 535.7,929.60 533.7,929.25 531.8,929.25 529.8,929.60 527.9,929.60 525.9,929.25 523.9,929.60 522.0,929.25 520.0,929.60 518.0,929.60 516.1,929.60 514.1,929.60 512.1,929.60 510.2,929.60 508.2,929.60 506.2,929.60 504.3,929.60 502.3,929.60 500.3,929.60 498.4,929.60 496.4,929.60 494.4,929.60 492.5,929.60 490.5,929.60 488.6,929.60 486.6,929.60 484.6,929.60 482.7,929.60 480.7,929.60 478.7,929.60 476.8,929.60 474.8,929.60 472.8,929.60 470.9,929.60 468.9,929.60 466.9,929.60 465.0,929.60 463.0,929.60 461.0,929.60 459.1,929.60 457.1,929.60 455.1,929.60 453.2,929.60 451.2,929.60 449.3,929.60 447.3,929.60 445.3,929.60 443.4,929.60 441.4,929.60 439.4,929.60 437.5,929.60 435.5,929.60 433.5,929.60 431.6,929.60 429.6,929.60 427.6,929.60 425.7,929.60 423.7,929.60 421.7,929.60 419.8,929.60 417.8,929.60 415.8,929.60 413.9,929.60 411.9,929.60 410.0,929.60 408.0,929.60 406.0,929.60 404.1,929.60 402.1,929.60 400.1,929.60 398.2,929.60 396.2,929.60 394.2,929.60 392.3,929.60 390.3,929.60 388.3,929.60 386.4,929.60 384.4,929.60 382.4,929.60 380.5,929.60 378.5,929.60 376.6,929.60 374.6,929.60 372.6,929.60 370.7,929.60 368.7,929.60 366.7,929.60 364.8,929.60 362.8,929.60 360.8,929.60 358.9,929.60 356.9,929.60 354.9,929.60 353.0,929.60 351.0,929.60 349.0,929.60 347.1,929.60 345.1,929.60 343.1,929.60 341.2,929.60 339.2,929.60 337.3,929.60 335.3,929.60 333.3,929.60 331.4,929.60 329.4,929.60 327.4,929.60 325.5,929.60 323.5,929.60 321.5,929.60 319.6,929.60 317.6,929.60 315.6,929.60 313.7,929.60 311.7,929.60 309.7,929.60 307.8,929.60 305.8,929.60 303.8,929.60 301.9,929.60 299.9,929.60 298.0,929.60 296.0,929.60 294.0,929.60 292.1,929.60 290.1,929.60 288.1,929.60 286.2,929.60 284.2,929.60 282.2,929.60 280.3,929.60 278.3,929.60 276.3,929.60 274.4,929.60 272.4,929.60 270.4,929.60 268.5,929.60 266.5,929.60 264.5,929.60 262.6,929.60 260.6,929.60 258.7,929.60 256.7,929.60 254.7,929.60 252.8,928.50 250.8,928.50 248.8,928.50 246.9,928.50 244.9,929.60 242.9,929.60 241.0,929.60 239.0,929.60 237.0,929.60 235.1,929.60 233.1,929.60 231.1,929.60 229.2,929.60 227.2,929.60 225.2,929.60 223.3,929.60 221.3,929.60 219.4,929.60 217.4,929.60 215.4,929.60 213.5,929.60 211.5,929.60 209.5,929.60 207.6,929.60 205.6,929.60 203.6,929.60 201.7,929.60 199.7,929.60 197.7,929.60 195.8,929.60 193.8,929.60 191.8,929.60 189.9,929.60 187.9,929.60 186.0,929.60 184.0,929.60 182.0,929.60 180.1,929.60 178.1,928.80 176.1,928.80 174.2,933.36 172.2,936.40 170.2,936.41 168.3,936.42 166.3,935.73 164.3,936.44 162.4,936.45 160.4,936.45 158.4,936.46 156.5,936.47 154.5,935.78 152.5,935.79 150.6,936.50 148.6,936.50 146.7,936.51 144.7,936.52 142.7,936.53 140.8,936.54 138.8,936.54 136.8,936.55 134.9,936.56 132.9,936.57 130.9,936.58 129.0,936.59 127.0,936.59 125.0,936.60 123.1,936.61 121.1,936.62 119.1,936.63 117.2,936.64 115.2,936.64 113.2,936.65 111.3,936.66 109.3,936.67 107.4,936.68 105.4,936.69 103.4,936.69 101.5,936.70 99.5,936.71 97.5,936.72 95.6,936.73 93.6,936.73 91.6,936.74 89.7,936.05 87.7,936.76 85.7,936.77 83.8,936.78 81.8,936.78 79.8,936.79 77.9,936.80 75.9,936.81 73.9,936.82 72.0,936.83 70.0,936.83 68.1,936.84 66.1,936.85 64.1,936.86 62.2,936.87 60.2,936.88 58.2,936.88 56.3,936.89 54.3,936.90" fill="#7eb26d" fill-opacity=".4"/>
<polygon points="54.3,936.90 56.3,936.89 58.2,936.88 60.2,936.88 62.2,936.87 64.1,936.86 66.1,936.85 68.1,936.84 70.0,936.83 72.0,936.83 73.9,936.82 75.9,936.81 77.9,936.80 79.8,936.79 81.8,936.78 83.8,936.78 85.7,936.77 87.7,936.76 89.7,936.05 91.6,936.74 93.6,936.73 95.6,936.73 97.5,936.72 99.5,936.71 101.5,936.70 103.4,936.69 105.4,936.69 107.4,936.68 109.3,936.67 111.3,936.66 113.2,936.65 115.2,936.64 117.2,936.64 119.1,936.63 121.1,936.62 123.1,936.61 125.0,936.60 127.0,936.59 129.0,936.59 130.9,936.58 132.9,936.57 134.9,936.56 136.8,936.55 138.8,936.54 140.8,936.54 142.7,936.53 144.7,936.52 146.7,936.51 148.6,936.50 150.6,936.50 152.5,935.79 154.5,935.78 156.5,936.47 158.4,936.46 160.4,936.45 162.4,936.45 164.3,936.44 166.3,935.73 168.3,936.42 170.2,936.41 172.2,936.40 174.2,933.36 176.1,928.80 178.1,928.80 180.1,929.60 182.0,929.60 184.0,929.60 186.0,929.60 187.9,929.60 189.9,929.60 191.8,929.60 193.8,929.60 195.8,929.60 197.7,929.60 199.7,929.60 201.7,929.60 203.6,929.60 205.6,929.60 207.6,929.60 209.5,929.60 211.5,929.60 213.5,929.60 215.4,929.60 217.4,929.60 219.4,929.60 221.3,929.60 223.3,929.60 225.2,929.60 227.2,929.60 229.2,929.60 231.1,929.60 233.1,929.60 235.1,929.60 237.0,929.60 239.0,929.60 241.0,929.60 242.9,929.60 244.9,929.60 246.9,928.50 248.8,928.50 250.8,928.50 252.8,928.50 254.7,929.60 256.7,929.60 258.7,929.60 260.6,929.60 262.6,929.60 264.5,929.60 266.5,929.60 268.5,929.60 270.4,929.60 272.4,929.60 274.4,929.60 276.3,929.60 278.3,929.60 280.3,929.60 282.2,929.60 284.2,929.60 286.2,929.60 288.1,929.60 290.1,929.60 292.1,929.60 294.0,929.60 296.0,929.60 298.0,929.60 299.9,929.60 301.9,929.60 303.8,929.60 305.8,929.60 307.8,929.60 309.7,929.60 311.7,929.60 313.7,929.60 315.6,929.60 317.6,929.60 319.6,929.60 321.5,929.60 323.5,929.60 325.5,929.60 327.4,929.60 329.4,929.60 331.4,929.60 333.3,929.60 335.3,929.60 337.3,929.60 339.2,929.60 341.2,929.60 343.1,929.60 345.1,929.60 347.1,929.60 349.0,929.60 351.0,929.60 353.0,929.60 354.9,929.60 356.9,929.60 358.9,929.60 360.8,929.60 362.8,929.60 364.8,929.60 366.7,929.60 368.7,929.60 370.7,929.60 372.6,929.60 374.6,929.60 376.6,929.60 378.5,929.60 380.5,929.60 382.4,929.60 384.4,929.60 386.4,929.60 388.3,929.60 390.3,929.60 392.3,929.60 394.2,929.60 396.2,929.60 398.2,929.60 400.1,929.60 402.1,929.60 404.1,929.60 406.0,929.60 408.0,929.60 410.0,929.60 411.9,929.60 413.9,929.60 415.8,929.60 417.8,929.60 419.8,929.60 421.7,929.60 423.7,929.60 425.7,929.60 427.6,929.60 429.6,929.60 431.6,929.60 433.5,929.60 435.5,929.60 437.5,929.60 439.4,929.60 441.4,929.60 443.4,929.60 445.3,929.60 447.3,929.60 449.3,929.60 451.2,929.60 453.2,929.60 455.1,929.60 457.1,929.60 459.1,929.60 461.0,929.60 463.0,929.60 465.0,929.60 466.9,929.60 468.9,929.60 470.9,929.60 472.8,929.60 474.8,929.60 476.8,929.60 478.7,929.60 480.7,929.60 482.7,929.60 484.6,929.60 486.6,929.60 488.6,929.60 490.5,929.60 492.5,929.60 494.4,929.60 496.4,929.60 498.4,929.60 500.3,929.60 502.3,929.60 504.3,929.60 506.2,929.60 508.2,929.60 510.2,929.60 512.1,929.60 514.1,929.60 516.1,929.60 518.0,929.60 520.0,929.60 522.0,929.25 523.9,929.60 525.9,929.25 527.9,929.60 529.8,929.60 531.8,929.25 533.7,929.25 535.7,929.60 537.7,929.25 539.6,929.25 541.6,929.60 543.6,929.25 545.5,929.60 547.5,929.25 549.5,929.60 551.4,929.25 553.4,929.60 555.4,929.60 557.3,929.60 559.3,929.60 561.3,929.60 563.2,929.25 565.2,929.60 567.1,929.60 569.1,929.25 571.1,929.25 573.0,929.60 575.0,929.25 577.0,929.60 578.9,929.60 580.9,929.60 582.9,929.60 584.8,929.25 586.8,929.60 588.8,929.25 590.7,929.60 592.7,929.60 594.7,929.25 596.6,929.25 598.6,929.25 600.6,929.60 602.5,929.25 604.5,929.60 606.4,929.25 608.4,929.60 610.4,929.60 612.3,929.60 614.3,929.60 616.3,929.60 618.2,929.60 620.2,929.60 622.2,929.60 624.1,929.60 626.1,929.60 628.1,929.60 630.0,929.60 632.0,929.60 634.0,929.60 635.9,929.60 637.9,929.60 639.9,929.60 641.8,929.60 643.8,929.60 645.7,929.60 647.7,929.60 649.7,929.60 651.6,929.60 653.6,929.60 655.6,929.60 657.5,929.60 659.5,929.60 661.5,929.60 663.4,929.60 665.4,929.60 667.4,929.60 669.3,929.60 671.3,929.60 673.3,929.60 675.2,929.60 677.2,929.60 679.2,929.60 681.1,929.60 683.1,929.60 685.0,929.60 687.0,929.60 689.0,929.60 690.9,929.60 692.9,929.60 694.9,929.60 696.8,929.60 698.8,929.60 700.8,929.60 702.7,929.60 704.7,929.60 706.7,929.60 708.6,929.60 710.6,929.60 712.6,929.60 714.5,929.60 716.5,929.60 718.5,929.60 720.4,929.60 722.4,929.60 724.3,929.60 726.3,929.60 728.3,929.60 730.2,929.60 732.2,929.60 734.2,929.60 736.1,929.60 738.1,929.60 740.1,929.60 742.0,929.60 744.0,929.60 746.0,929.60 747.9,929.60 749.9,929.60 751.9,929.60 753.8,929.60 755.8,929.60 757.7,929.60 759.7,929.60 761.7,929.60 763.6,929.60 765.6,929.60 767.6,929.60 769.5,929.60 771.5,929.60 773.5,929.60 775.4,929.60 777.4,929.60 779.4,929.60 781.3,929.60 783.3,929.60 785.3,929.60 787.2,929.60 789.2,929.60 791.2,929.60 793.1,929.60 795.1,929.60 797.0,929.60 799.0,929.60 801.0,929.60 802.9,929.60 804.9,929.60 806.9,929.60 808.8,929.60 810.8,929.60 812.8,929.60 814.7,929.60 816.7,929.60 818.7,929.60 820.6,929.60 822.6,929.60 824.6,929.60 826.5,929.60 828.5,929.60 830.5,929.60 832.4,929.60 834.4,929.60 836.3,929.60 838.3,929.60 840.3,929.60 842.2,929.60 844.2,929.60 846.2,929.60 848.1,929.60 850.1,929.60 852.1,929.60 854.0,929.60 856.0,929.60 858.0,929.60 859.9,929.60 861.9,929.60 863.9,929.60 865.8,929.60 867.8,929.60 869.8,929.60 871.7,929.60 873.7,929.60 875.6,929.60 877.6,929.60 879.6,929.60 881.5,929.60 883.5,929.60 885.5,929.60 887.4,929.60 889.4,929.60 891.4,929.60 893.3,929.60 895.3,929.60 897.3,929.60 899.2,929.60 901.2,929.60 903.2,929.60 905.1,929.60 907.1,929.60 909.0,929.60 911.0,929.60 913.0,929.60 914.9,929.60 916.9,929.60 918.9,929.60 920.8,929.60 922.8,929.60 924.8,929.60 926.7,929.60 928.7,929.60 930.7,929.60 932.6,929.60 934.6,929.60 936.6,929.60 938.5,929.60 940.5,929.60 942.5,929.60 944.4,929.60 946.4,929.60 948.3,929.60 950.3,929.60 952.3,929.60 954.2,929.60 956.2,929.60 958.2,929.60 960.1,929.60 962.1,929.60 964.1,929.60 966.0,929.60 968.0,929.60 970.0,929.60 971.9,929.60 973.9,929.60 975.9,929.60 977.8,929.60 979.8,929.60 981.8,929.60 983.7,929.60 985.7,929.60 987.6,929.60 989.6,929.60 991.6,929.60 993.5,929.60 995.5,929.60 997.5,929.60 999.4,929.60 1001.4,929.60 1003.4,929.60 1005.3,929.60 1007.3,929.60 1009.3,929.60 1011.2,929.60 1013.2,929.60 1015.2,929.60 1017.1,929.60 1019.1,929.60 1021.1,929.60 1023.0,929.60 1025.0,929.60 1026.9,929.60 1028.9,929.60 1030.9,929.60 1032.8,929.60 1034.8,929.60 1036.8,929.60 1038.7,929.60 1040.7,929.60 1042.7,929.60 1044.6,929.60 1046.6,929.60 1048.6,929.60 1050.5,929.60 1052.5,929.60 1054.5,929.60 1056.4,929.60 1058.4,929.60 1060.4,929.60 1062.3,929.60 1064.3,929.60 1066.2,928.70 1068.2,928.70 1070.2,928.70 1072.1,931.10 1074.1,931.10 1076.1,931.10 1078.0,931.10 1080.0,931.10 1082.0,931.10 1083.9,931.10 1085.9,931.10 1087.9,931.10 1089.8,931.10 1091.8,931.10 1093.8,931.10 1095.7,931.10 1097.7,931.10 1099.6,931.10 1101.6,931.10 1103.6,931.10 1105.5,931.10 1107.5,931.10 1109.5,931.10 1111.4,931.10 1113.4,931.10 1115.4,931.10 1117.3,931.10 1119.3,931.10 1121.3,931.10 1123.2,931.10 1125.2,931.10 1127.2,931.10 1129.1,931.10 1131.1,931.10 1133.1,931.10 1135.0,931.10 1137.0,931.10 1138.9,931.10 1140.9,931.10 1142.9,931.10 1144.8,931.10 1146.8,931.10 1148.8,931.10 1150.7,931.10 1152.7,931.10 1154.7,931.10 1156.6,931.10 1158.6,931.10 1160.6,931.10 1162.5,931.10 1164.5,931.10 1166.5,931.10 1168.4,931.10 1170.4,931.10 1172.4,931.10 1174.3,931.10 1176.3,931.10 1178.2,931.10 1180.2,931.10 1182.2,931.10 1184.1,931.10 1186.1,931.10 1188.1,931.10 1190.0,931.10 1192.0,931.10 1194.0,931.10 1195.9,931.10 1197.9,931.10 1199.9,931.10 1201.8,931.10 1203.8,931.10 1205.8,931.10 1207.7,931.10 1209.7,931.10 1211.7,931.10 1213.6,931.10 1215.6,931.10 1217.5,931.10 1219.5,931.10 1221.5,931.10 1223.4,931.10 1225.4,931.10 1227.4,931.10 1229.3,931.10 1231.3,931.10 1231.3,1020.60 1229.3,1020.60 1227.4,1020.60 1225.4,1020.60 1223.4,1020.60 1221.5,1020.60 1219.5,1020.60 1217.5,1020.60 1215.6,1020.60 1213.6,1020.60 1211.7,1020.60 1209.7,1020.60 1207.7,1020.60 1205.8,1020.60 1203.8,1020.60 1201.8,1020.60 1199.9,1020.60 1197.9,1020.60 1195.9,1020.60 1194.0,1020.60 1192.0,1020.60 1190.0,1020.60 1188.1,1020.60 1186.1,1020.60 1184.1,1020.60 1182.2,1020.60 1180.2,1020.60 1178.2,1020.43 1176.3,1020.08 1174.3,1020.60 1172.4,1020.60 1170.4,1020.60 1168.4,1020.60 1166.5,1020.60 1164.5,1020.60 1162.5,1020.60 1160.6,1020.60 1158.6,1020.60 1156.6,1020.60 1154.7,1020.60 1152.7,1020.60 1150.7,1020.60 1148.8,1020.02 1146.8,1020.35 1144.8,1020.60 1142.9,1020.60 1140.9,1020.60 1138.9,1020.60 1137.0,1020.19 1135.0,1020.19 1133.1,1020.60 1131.1,1020.60 1129.1,1020.60 1127.2,1020.60 1125.2,1020.60 1123.2,1020.60 1121.3,1020.60 1119.3,1020.60 1117.3,1020.60 1115.4,1020.60 1113.4,1020.54 1111.4,1019.97 1109.5,1020.60 1107.5,1020.60 1105.5,1020.60 1103.6,1020.60 1101.6,1020.60 1099.6,1020.60 1097.7,1020.60 1095.7,1020.60 1093.8,1020.60 1091.8,1020.60 1089.8,1020.60 1087.9,1020.60 1085.9,1020.60 1083.9,1020.60 1082.0,1020.60 1080.0,1020.60 1078.0,1020.60 1076.1,1020.60 1074.1,1020.60 1072.1,1020.60 1070.2,1020.60 1068.2,1020.60 1066.2,1020.60 1064.3,1019.38 1062.3,1020.60 1060.4,1020.60 1058.4,1020.60 1056.4,1020.60 1054.5,1020.60 1052.5,1020.60 1050.5,1020.60 1048.6,1020.60 1046.6,1020.60 1044.6,1020.60 1042.7,1020.60 1040.7,1020.60 1038.7,1020.60 1036.8,1020.60 1034.8,1020.60 1032.8,1020.60 1030.9,1020.60 1028.9,1020.60 1026.9,1020.60 1025.0,1020.60 1023.0,1020.60 1021.1,1020.60 1019.1,1020.60 1017.1,1020.60 1015.2,1020.60 1013.2,1020.60 1011.2,1020.60 1009.3,1020.60 1007.3,1020.60 1005.3,1020.60 1003.4,1020.60 1001.4,1020.60 999.4,1020.60 997.5,1020.60 995.5,1020.60 993.5,1020.60 991.6,1020.60 989.6,1019.71 987.6,1020.60 985.7,1020.05 983.7,1020.46 981.8,1020.60 979.8,1020.60 977.8,1020.60 975.9,1020.60 973.9,1020.60 971.9,1020.60 970.0,1020.60 968.0,1020.60 966.0,1020.60 964.1,1020.60 962.1,1020.60 960.1,1020.60 958.2,1020.60 956.2,1020.60 954.2,1020.60 952.3,1020.60 950.3,1020.60 948.3,1020.60 946.4,1020.60 944.4,1020.60 942.5,1020.60 940.5,1020.60 938.5,1020.60 936.6,1020.60 934.6,1020.60 932.6,1020.60 930.7,1020.60 928.7,1020.60 926.7,1020.60 924.8,1020.60 922.8,1020.60 920.8,1020.60 918.9,1020.60 916.9,1020.60 914.9,1020.60 913.0,1020.60 911.0,1020.60 909.0,1020.60 907.1,1020.60 905.1,1020.60 903.2,1020.60 901.2,1020.60 899.2,1020.60 897.3,1020.60 895.3,1020.60 893.3,1020.60 891.4,1020.60 889.4,1020.60 887.4,1020.60 885.5,1020.60 883.5,1020.60 881.5,1020.60 879.6,1020.60 877.6,1020.60 875.6,1020.60 873.7,1020.60 871.7,1020.60 869.8,1020.60 867.8,1020.60 865.8,1020.60 863.9,1020.60 861.9,1020.60 859.9,1020.60 858.0,1020.60 856.0,1020.60 854.0,1020.60 852.1,1019.36 850.1,1020.60 848.1,1020.60 846.2,1020.60 844.2,1020.60 842.2,1020.60 840.3,1020.60 838.3,1020.60 836.3,1020.60 834.4,1020.60 832.4,1020.60 830.5,1020.60 828.5,1020.60 826.5,1020.60 824.6,1020.60 822.6,1020.60 820.6,1020.60 818.7,1020.60 816.7,1020.60 814.7,1020.60 812.8,1020.60 810.8,1020.60 808.8,1020.60 806.9,1020.60 804.9,1020.60 802.9,1020.60 801.0,1020.60 799.0,1020.60 797.0,1020.60 795.1,1020.60 793.1,1020.60 791.2,1020.60 789.2,1020.60 787.2,1020.60 785.3,1020.60 783.3,1020.60 781.3,1020.60 779.4,1020.60 777.4,1020.60 775.4,1020.60 773.5,1020.60 771.5,1020.60 769.5,1020.60 767.6,1020.60 765.6,1020.60 763.6,1020.60 761.7,1020.60 759.7,1020.60 757.7,1020.60 755.8,1020.60 753.8,1020.60 751.9,1020.60 749.9,1020.60 747.9,1020.60 746.0,1020.60 744.0,1020.60 742.0,1020.60 740.1,1020.60 738.1,1020.60 736.1,1020.60 734.2,1020.60 732.2,1020.60 730.2,1020.60 728.3,1020.60 726.3,1020.60 724.3,1020.60 722.4,1020.60 720.4,1020.60 718.5,1020.60 716.5,1020.60 714.5,1020.60 712.6,1020.60 710.6,1020.60 708.6,1020.60 706.7,1020.60 704.7,1020.60 702.7,1020.60 700.8,1020.60 698.8,1020.60 696.8,1020.60 694.9,1020.60 692.9,1020.60 690.9,1020.60 689.0,1020.60 687.0,1020.60 685.0,1020.60 683.1,1020.60 681.1,1020.60 679.2,1020.60 677.2,1020.35 675.2,1020.02 673.3,1020.60 671.3,1020.60 669.3,1020.60 667.4,1020.60 665.4,1020.60 663.4,1020.60 661.5,1020.60 659.5,1020.60 657.5,1020.60 655.6,1020.60 653.6,1020.60 651.6,1020.60 649.7,1020.60 647.7,1020.60 645.7,1020.60 643.8,1020.60 641.8,1020.60 639.9,1020.60 637.9,1020.60 635.9,1020.60 634.0,1020.60 632.0,1020.60 630.0,1020.60 628.1,1020.60 626.1,1020.60 624.1,1020.60 622.2,1020.60 620.2,1020.60 618.2,1020.60 616.3,1020.60 614.3,1020.60 612.3,1020.60 610.4,1020.60 608.4,1020.60 606.4,1020.60 604.5,1020.60 602.5,1020.60 600.6,1020.60 598.6,1020.60 596.6,1020.60 594.7,1020.60 592.7,1020.60 590.7,1020.60 588.8,1020.60 586.8,1020.60 584.8,1020.60 582.9,1020.60 580.9,1020.60 578.9,1020.60 577.0,1020.60 575.0,1020.60 573.0,1020.60 571.1,1020.60 569.1,1020.60 567.1,1020.60 565.2,1020.60 563.2,1020.60 561.3,1020.60 559.3,1020.60 557.3,1020.60 555.4,1020.60 553.4,1020.60 551.4,1020.60 549.5,1020.60 547.5,1020.60 545.5,1020.60 543.6,1020.60 541.6,1020.60 539.6,1020.60 537.7,1020.60 535.7,1020.60 533.7,1020.60 531.8,1020.60 529.8,1020.60 527.9,1020.17 525.9,1020.34 523.9,1020.60 522.0,1020.16 520.0,1020.21 518.0,1020.60 516.1,1020.60 514.1,1020.60 512.1,1020.60 510.2,1020.60 508.2,1020.60 506.2,1020.60 504.3,1020.60 502.3,1020.60 500.3,1020.60 498.4,1020.60 496.4,1020.60 494.4,1020.60 492.5,1020.60 490.5,1020.60 488.6,1020.60 486.6,1020.60 484.6,1020.60 482.7,1020.60 480.7,1020.60 478.7,1020.60 476.8,1020.60 474.8,1020.60 472.8,1020.60 470.9,1020.60 468.9,1020.60 466.9,1020.60 465.0,1020.60 463.0,1020.60 461.0,1020.60 459.1,1020.60 457.1,1020.60 455.1,1020.60 453.2,1020.60 451.2,1020.60 449.3,1020.60 447.3,1020.60 445.3,1020.60 443.4,1020.60 441.4,1020.60 439.4,1020.60 437.5,1020.60 435.5,1020.60 433.5,1020.60 431.6,1020.60 429.6,1019.88 427.6,1020.49 425.7,1020.60 423.7,1020.60 421.7,1020.60 419.8,1020.60 417.8,1020.60 415.8,1020.60 413.9,1020.60 411.9,1020.60 410.0,1020.60 408.0,1019.61 406.0,1020.60 404.1,1020.60 402.1,1020.60 400.1,1020.60 398.2,1019.71 396.2,1020.60 394.2,1020.60 392.3,1020.60 390.3,1020.60 388.3,1020.60 386.4,1020.60 384.4,1020.60 382.4,1020.60 380.5,1020.60 378.5,1020.60 376.6,1020.60 374.6,1020.60 372.6,1020.60 370.7,1020.60 368.7,1020.60 366.7,1020.60 364.8,1020.60 362.8,1020.60 360.8,1020.60 358.9,1020.60 356.9,1020.60 354.9,1020.60 353.0,1020.60 351.0,1020.60 349.0,1020.60 347.1,1020.60 345.1,1020.60 343.1,1020.60 341.2,1020.60 339.2,1020.60 337.3,1020.60 335.3,1020.60 333.3,1020.60 331.4,1020.60 329.4,1020.60 327.4,1020.60 325.5,1020.60 323.5,1020.60 321.5,1020.60 319.6,1020.60 317.6,1020.60 315.6,1020.60 313.7,1020.60 311.7,1020.60 309.7,1020.60 307.8,1020.60 305.8,1020.60 303.8,1020.60 301.9,1020.60 299.9,1020.60 298.0,1020.60 296.0,1020.60 294.0,1020.60 292.1,1020.60 290.1,1020.60 288.1,1020.60 286.2,1020.60 284.2,1020.60 282.2,1020.60 280.3,1020.60 278.3,1020.60 276.3,1020.60 274.4,1020.60 272.4,1020.60 270.4,1020.60 268.5,1020.60 266.5,1020.60 264.5,1020.60 262.6,1020.60 260.6,1020.60 258.7,1020.60 256.7,1020.60 254.7,1020.60 252.8,1019.91 250.8,1020.33 248.8,1020.60 246.9,1017.69 244.9,1020.60 242.9,1020.60 241.0,1020.60 239.0,1020.60 237.0,1020.60 235.1,1020.60 233.1,1020.60 231.1,1020.60 229.2,1020.60 227.2,1020.60 225.2,1020.60 223.3,1020.60 221.3,1020.60 219.4,1020.60 217.4,1020.60 215.4,1020.60 213.5,1020.60 211.5,1020.60 209.5,1020.60 207.6,1020.60 205.6,1020.60 203.6,1020.60 201.7,1020.60 199.7,1020.60 197.7,1020.60 195.8,1020.60 193.8,1020.60 191.8,1020.60 189.9,1020.60 187.9,1020.60 186.0,1020.60 184.0,1020.60 182.0,1020.60 180.1,1020.60 178.1,1020.60 176.1,1020.60 174.2,1020.60 172.2,1020.60 170.2,1020.60 168.3,1020.60 166.3,1020.60 164.3,1020.60 162.4,1020.60 160.4,1020.60 158.4,1020.55 156.5,1019.82 154.5,1020.60 152.5,1020.60 150.6,1020.60 148.6,1020.60 146.7,1020.60 144.7,1020.60 142.7,1020.60 140.8,1020.60 138.8,1020.60 136.8,1020.60 134.9,1020.60 132.9,1020.60 130.9,1020.60 129.0,1020.60 127.0,1020.60 125.0,1020.60 123.1,1020.60 121.1,1020.60 119.1,1020.60 117.2,1020.60 115.2,1020.60 113.2,1020.60 111.3,1020.60 109.3,1020.60 107.4,1020.60 105.4,1020.60 103.4,1020.60 101.5,1020.60 99.5,1020.60 97.5,1020.60 95.6,1020.60 93.6,1020.60 91.6,1020.60 89.7,1020.60 87.7,1020.60 85.7,1020.60 83.8,1020.60 81.8,1020.60 79.8,1020.60 77.9,1020.60 75.9,1020.60 73.9,1020.60 72.0,1020.60 70.0,1020.60 68.1,1020.60 66.1,1020.60 64.1,1020.60 62.2,1020.60 60.2,1020.60 58.2,1020.60 56.3,1020.60 54.3,1020.60" fill="#052b51" fill-opacity=".4"/>
<polygon points="54.3,1020.60 56.3,1020.60 58.2,1020.60 60.2,1020.60 62.2,1020.60 64.1,1020.60 66.1,1020.60 68.1,1020.60 70.0,1020.60 72.0,1020.60 73.9,1020.60 75.9,1020.60 77.9,1020.60 79.8,1020.60 81.8,1020.60 83.8,1020.60 85.7,1020.60 87.7,1020.60 89.7,1020.60 91.6,1020.60 93.6,1020.60 95.6,1020.60 97.5,1020.60 99.5,1020.60 101.5,1020.60 103.4,1020.60 105.4,1020.60 107.4,1020.60 109.3,1020.60 111.3,1020.60 113.2,1020.60 115.2,1020.60 117.2,1020.60 119.1,1020.60 121.1,1020.60 123.1,1020.60 125.0,1020.60 127.0,1020.60 129.0,1020.60 130.9,1020.60 132.9,1020.60 134.9,1020.60 136.8,1020.60 138.8,1020.60 140.8,1020.60 142.7,1020.60 144.7,1020.60 146.7,1020.60 148.6,1020.60 150.6,1020.60 152.5,1020.60 154.5,1020.60 156.5,1019.82 158.4,1020.55 160.4,1020.60 162.4,1020.60 164.3,1020.60 166.3,1020.60 168.3,1020.60 170.2,1020.60 172.2,1020.60 174.2,1020.60 176.1,1020.60 178.1,1020.60 180.1,1020.60 182.0,1020.60 184.0,1020.60 186.0,1020.60 187.9,1020.60 189.9,1020.60 191.8,1020.60 193.8,1020.60 195.8,1020.60 197.7,1020.60 199.7,1020.60 201.7,1020.60 203.6,1020.60 205.6,1020.60 207.6,1020.60 209.5,1020.60 211.5,1020.60 213.5,1020.60 215.4,1020.60 217.4,1020.60 219.4,1020.60 221.3,1020.60 223.3,1020.60 225.2,1020.60 227.2,1020.60 229.2,1020.60 231.1,1020.60 233.1,1020.60 235.1,1020.60 237.0,1020.60 239.0,1020.60 241.0,1020.60 242.9,1020.60 244.9,1020.60 246.9,1017.69 248.8,1020.60 250.8,1020.33 252.8,1019.91 254.7,1020.60 256.7,1020.60 258.7,1020.60 260.6,1020.60 262.6,1020.60 264.5,1020.60 266.5,1020.60 268.5,1020.60 270.4,1020.60 272.4,1020.60 274.4,1020.60 276.3,1020.60 278.3,1020.60 280.3,1020.60 282.2,1020.60 284.2,1020.60 286.2,1020.60 288.1,1020.60 290.1,1020.60 292.1,1020.60 294.0,1020.60 296.0,1020.60 298.0,1020.60 299.9,1020.60 301.9,1020.60 303.8,1020.60 305.8,1020.60 307.8,1020.60 309.7,1020.60 311.7,1020.60 313.7,1020.60 315.6,1020.60 317.6,1020.60 319.6,1020.60 321.5,1020.60 323.5,1020.60 325.5,1020.60 327.4,1020.60 329.4,1020.60 331.4,1020.60 333.3,1020.60 335.3,1020.60 337.3,1020.60 339.2,1020.60 341.2,1020.60 343.1,1020.60 345.1,1020.60 347.1,1020.60 349.0,1020.60 351.0,1020.60 353.0,1020.60 354.9,1020.60 356.9,1020.60 358.9,1020.60 360.8,1020.60 362.8,1020.60 364.8,1020.60 366.7,1020.60 368.7,1020.60 370.7,1020.60 372.6,1020.60 374.6,1020.60 376.6,1020.60 378.5,1020.60 380.5,1020.60 382.4,1020.60 384.4,1020.60 386.4,1020.60 388.3,1020.60 390.3,1020.60 392.3,1020.60 394.2,1020.60 396.2,1020.60 398.2,1019.71 400.1,1020.60 402.1,1020.60 404.1,1020.60 406.0,1020.60 408.0,1019.61 410.0,1020.60 411.9,1020.60 413.9,1020.60 415.8,1020.60 417.8,1020.60 419.8,1020.60 421.7,1020.60 423.7,1020.60 425.7,1020.60 427.6,1020.49 429.6,1019.88 431.6,1020.60 433.5,1020.60 435.5,1020.60 437.5,1020.60 439.4,1020.60 441.4,1020.60 443.4,1020.60 445.3,1020.60 447.3,1020.60 449.3,1020.60 451.2,1020.60 453.2,1020.60 455.1,1020.60 457.1,1020.60 459.1,1020.60 461.0,1020.60 463.0,1020.60 465.0,1020.60 466.9,1020.60 468.9,1020.60 470.9,1020.60 472.8,1020.60 474.8,1020.60 476.8,1020.60 478.7,1020.60 480.7,1020.60 482.7,1020.60 484.6,1020.60 486.6,1020.60 488.6,1020.60 490.5,1020.60 492.5,1020.60 494.4,1020.60 496.4,1020.60 498.4,1020.60 500.3,1020.60 502.3,1020.60 504.3,1020.60 506.2,1020.60 508.2,1020.60 510.2,1020.60 512.1,1020.60 514.1,1020.60 516.1,1020.60 518.0,1020.60 520.0,1020.21 522.0,1020.16 523.9,1020.60 525.9,1020.34 527.9,1020.17 529.8,1020.60 531.8,1020.60 533.7,1020.60 535.7,1020.60 537.7,1020.60 539.6,1020.60 541.6,1020.60 543.6,1020.60 545.5,1020.60 547.5,1020.60 549.5,1020.60 551.4,1020.60 553.4,1020.60 555.4,1020.60 557.3,1020.60 559.3,1020.60 561.3,1020.60 563.2,1020.60 565.2,1020.60 567.1,1020.60 569.1,1020.60 571.1,1020.60 573.0,1020.60 575.0,1020.60 577.0,1020.60 578.9,1020.60 580.9,1020.60 582.9,1020.60 584.8,1020.60 586.8,1020.60 588.8,1020.60 590.7,1020.60 592.7,1020.60 594.7,1020.60 596.6,1020.60 598.6,1020.60 600.6,1020.60 602.5,1020.60 604.5,1020.60 606.4,1020.60 608.4,1020.60 610.4,1020.60 612.3,1020.60 614.3,1020.60 616.3,1020.60 618.2,1020.60 620.2,1020.60 622.2,1020.60 624.1,1020.60 626.1,1020.60 628.1,1020.60 630.0,1020.60 632.0,1020.60 634.0,1020.60 635.9,1020.60 637.9,1020.60 639.9,1020.60 641.8,1020.60 643.8,1020.60 645.7,1020.60 647.7,1020.60 649.7,1020.60 651.6,1020.60 653.6,1020.60 655.6,1020.60 657.5,1020.60 659.5,1020.60 661.5,1020.60 663.4,1020.60 665.4,1020.60 667.4,1020.60 669.3,1020.60 671.3,1020.60 673.3,1020.60 675.2,1020.02 677.2,1020.35 679.2,1020.60 681.1,1020.60 683.1,1020.60 685.0,1020.60 687.0,1020.60 689.0,1020.60 690.9,1020.60 692.9,1020.60 694.9,1020.60 696.8,1020.60 698.8,1020.60 700.8,1020.60 702.7,1020.60 704.7,1020.60 706.7,1020.60 708.6,1020.60 710.6,1020.60 712.6,1020.60 714.5,1020.60 716.5,1020.60 718.5,1020.60 720.4,1020.60 722.4,1020.60 724.3,1020.60 726.3,1020.60 728.3,1020.60 730.2,1020.60 732.2,1020.60 734.2,1020.60 736.1,1020.60 738.1,1020.60 740.1,1020.60 742.0,1020.60 744.0,1020.60 746.0,1020.60 747.9,1020.60 749.9,1020.60 751.9,1020.60 753.8,1020.60 755.8,1020.60 757.7,1020.60 759.7,1020.60 761.7,1020.60 763.6,1020.60 765.6,1020.60 767.6,1020.60 769.5,1020.60 771.5,1020.60 773.5,1020.60 775.4,1020.60 777.4,1020.60 779.4,1020.60 781.3,1020.60 783.3,1020.60 785.3,1020.60 787.2,1020.60 789.2,1020.60 791.2,1020.60 793.1,1020.60 795.1,1020.60 797.0,1020.60 799.0,1020.60 801.0,1020.60 802.9,1020.60 804.9,1020.60 806.9,1020.60 808.8,1020.60 810.8,1020.60 812.8,1020.60 814.7,1020.60 816.7,1020.60 818.7,1020.60 820.6,1020.60 822.6,1020.60 824.6,1020.60 826.5,1020.60 828.5,1020.60 830.5,1020.60 832.4,1020.60 834.4,1020.60 836.3,1020.60 838.3,1020.60 840.3,1020.60 842.2,1020.60 844.2,1020.60 846.2,1020.60 848.1,1020.60 850.1,1020.60 852.1,1019.36 854.0,1020.60 856.0,1020.60 858.0,1020.60 859.9,1020.60 861.9,1020.60 863.9,1020.60 865.8,1020.60 867.8,1020.60 869.8,1020.60 871.7,1020.60 873.7,1020.60 875.6,1020.60 877.6,1020.60 879.6,1020.60 881.5,1020.60 883.5,1020.60 885.5,1020.60 887.4,1020.60 889.4,1020.60 891.4,1020.60 893.3,1020.60 895.3,1020.60 897.3,1020.60 899.2,1020.60 901.2,1020.60 903.2,1020.60 905.1,1020.60 907.1,1020.60 909.0,1020.60 911.0,1020.60 913.0,1020.60 914.9,1020.60 916.9,1020.60 918.9,1020.60 920.8,1020.60 922.8,1020.60 924.8,1020.60 926.7,1020.60 928.7,1020.60 930.7,1020.60 932.6,1020.60 934.6,1020.60 936.6,1020.60 938.5,1020.60 940.5,1020.60 942.5,1020.60 944.4,1020.60 946.4,1020.60 948.3,1020.60 950.3,1020.60 952.3,1020.60 954.2,1020.60 956.2,1020.60 958.2,1020.60 960.1,1020.60 962.1,1020.60 964.1,1020.60 966.0,1020.60 968.0,1020.60 970.0,1020.60 971.9,1020.60 973.9,1020.60 975.9,1020.60 977.8,1020.60 979.8,1020.60 981.8,1020.60 983.7,1020.46 985.7,1020.05 987.6,1020.60 989.6,1019.71 991.6,1020.60 993.5,1020.60 995.5,1020.60 997.5,1020.60 999.4,1020.60 1001.4,1020.60 1003.4,1020.60 1005.3,1020.60 1007.3,1020.60 1009.3,1020.60 1011.2,1020.60 1013.2,1020.60 1015.2,1020.60 1017.1,1020.60 1019.1,1020.60 1021.1,1020.60 1023.0,1020.60 1025.0,1020.60 1026.9,1020.60 1028.9,1020.60 1030.9,1020.60 1032.8,1020.60 1034.8,1020.60 1036.8,1020.60 1038.7,1020.60 1040.7,1020.60 1042.7,1020.60 1044.6,1020.60 1046.6,1020.60 1048.6,1020.60 1050.5,1020.60 1052.5,1020.60 1054.5,1020.60 1056.4,1020.60 1058.4,1020.60 1060.4,1020.60 1062.3,1020.60 1064.3,1019.38 1066.2,1020.60 1068.2,1020.60 1070.2,1020.60 1072.1,1020.60 1074.1,1020.60 1076.1,1020.60 1078.0,1020.60 1080.0,1020.60 1082.0,1020.60 1083.9,1020.60 1085.9,1020.60 1087.9,1020.60 1089.8,1020.60 1091.8,1020.60 1093.8,1020.60 1095.7,1020.60 1097.7,1020.60 1099.6,1020.60 1101.6,1020.60 1103.6,1020.60 1105.5,1020.60 1107.5,1020.60 1109.5,1020.60 1111.4,1019.97 1113.4,1020.54 1115.4,1020.60 1117.3,1020.60 1119.3,1020.60 1121.3,1020.60 1123.2,1020.60 1125.2,1020.60 1127.2,1020.60 1129.1,1020.60 1131.1,1020.60 1133.1,1020.60 1135.0,1020.19 1137.0,1020.19 1138.9,1020.60 1140.9,1020.60 1142.9,1020.60 1144.8,1020.60 1146.8,1020.35 1148.8,1020.02 1150.7,1020.60 1152.7,1020.60 1154.7,1020.60 1156.6,1020.60 1158.6,1020.60 1160.6,1020.60 1162.5,1020.60 1164.5,1020.60 1166.5,1020.60 1168.4,1020.60 1170.4,1020.60 1172.4,1020.60 1174.3,1020.60 1176.3,1020.08 1178.2,1020.43 1180.2,1020.60 1182.2,1020.60 1184.1,1020.60 1186.1,1020.60 1188.1,1020.60 1190.0,1020.60 1192.0,1020.60 1194.0,1020.60 1195.9,1020.60 1197.9,1020.60 1199.9,1020.60 1201.8,1020.60 1203.8,1020.60 1205.8,1020.60 1207.7,1020.60 1209.7,1020.60 1211.7,1020.60 1213.6,1020.60 1215.6,1020.60 1217.5,1020.60 1219.5,1020.60 1221.5,1020.60 1223.4,1020.60 1225.4,1020.60 1227.4,1020.60 1229.3,1020.60 1231.3,1020.60 1231.3,1041.7 54.3,1041.7" fill="#f2cc0c" fill-opacity=".4"/>
<polyline points="54.3,936.90 56.3,936.89 58.2,936.88 60.2,936.88 62.2,936.87 64.1,936.86 66.1,936.85 68.1,936.84 70.0,936.83 72.0,936.83 73.9,936.82 75.9,936.81 77.9,936.80 79.8,936.79 81.8,936.78 83.8,936.78 85.7,936.77 87.7,936.76 89.7,936.05 91.6,936.74 93.6,936.73 95.6,936.73 97.5,936.72 99.5,936.71 101.5,936.70 103.4,936.69 105.4,936.69 107.4,936.68 109.3,936.67 111.3,936.66 113.2,936.65 115.2,936.64 117.2,936.64 119.1,936.63 121.1,936.62 123.1,936.61 125.0,936.60 127.0,936.59 129.0,936.59 130.9,936.58 132.9,936.57 134.9,936.56 136.8,936.55 138.8,936.54 140.8,936.54 142.7,936.53 144.7,936.52 146.7,936.51 148.6,936.50 150.6,936.50 152.5,935.79 154.5,935.78 156.5,936.47 158.4,936.46 160.4,936.45 162.4,936.45 164.3,936.44 166.3,935.73 168.3,936.42 170.2,936.41 172.2,936.40 174.2,933.36 176.1,928.80 178.1,928.80 180.1,929.60 182.0,929.60 184.0,929.60 186.0,929.60 187.9,929.60 189.9,929.60 191.8,929.60 193.8,929.60 195.8,929.60 197.7,929.60 199.7,929.60 201.7,929.60 203.6,929.60 205.6,929.60 207.6,929.60 209.5,929.60 211.5,929.60 213.5,929.60 215.4,929.60 217.4,929.60 219.4,929.60 221.3,929.60 223.3,929.60 225.2,929.60 227.2,929.60 229.2,929.60 231.1,929.60 233.1,929.60 235.1,929.60 237.0,929.60 239.0,929.60 241.0,929.60 242.9,929.60 244.9,929.60 246.9,928.50 248.8,928.50 250.8,928.50 252.8,928.50 254.7,929.60 256.7,929.60 258.7,929.60 260.6,929.60 262.6,929.60 264.5,929.60 266.5,929.60 268.5,929.60 270.4,929.60 272.4,929.60 274.4,929.60 276.3,929.60 278.3,929.60 280.3,929.60 282.2,929.60 284.2,929.60 286.2,929.60 288.1,929.60 290.1,929.60 292.1,929.60 294.0,929.60 296.0,929.60 298.0,929.60 299.9,929.60 301.9,929.60 303.8,929.60 305.8,929.60 307.8,929.60 309.7,929.60 311.7,929.60 313.7,929.60 315.6,929.60 317.6,929.60 319.6,929.60 321.5,929.60 323.5,929.60 325.5,929.60 327.4,929.60 329.4,929.60 331.4,929.60 333.3,929.60 335.3,929.60 337.3,929.60 339.2,929.60 341.2,929.60 343.1,929.60 345.1,929.60 347.1,929.60 349.0,929.60 351.0,929.60 353.0,929.60 354.9,929.60 356.9,929.60 358.9,929.60 360.8,929.60 362.8,929.60 364.8,929.60 366.7,929.60 368.7,929.60 370.7,929.60 372.6,929.60 374.6,929.60 376.6,929.60 378.5,929.60 380.5,929.60 382.4,929.60 384.4,929.60 386.4,929.60 388.3,929.60 390.3,929.60 392.3,929.60 394.2,929.60 396.2,929.60 398.2,929.60 400.1,929.60 402.1,929.60 404.1,929.60 406.0,929.60 408.0,929.60 410.0,929.60 411.9,929.60 413.9,929.60 415.8,929.60 417.8,929.60 419.8,929.60 421.7,929.60 423.7,929.60 425.7,929.60 427.6,929.60 429.6,929.60 431.6,929.60 433.5,929.60 435.5,929.60 437.5,929.60 439.4,929.60 441.4,929.60 443.4,929.60 445.3,929.60 447.3,929.60 449.3,929.60 451.2,929.60 453.2,929.60 455.1,929.60 457.1,929.60 459.1,929.60 461.0,929.60 463.0,929.60 465.0,929.60 466.9,929.60 468.9,929.60 470.9,929.60 472.8,929.60 474.8,929.60 476.8,929.60 478.7,929.60 480.7,929.60 482.7,929.60 484.6,929.60 486.6,929.60 488.6,929.60 490.5,929.60 492.5,929.60 494.4,929.60 496.4,929.60 498.4,929.60 500.3,929.60 502.3,929.60 504.3,929.60 506.2,929.60 508.2,929.60 510.2,929.60 512.1,929.60 514.1,929.60 516.1,929.60 518.0,929.60 520.0,929.60 522.0,929.25 523.9,929.60 525.9,929.25 527.9,929.60 529.8,929.60 531.8,929.25 533.7,929.25 535.7,929.60 537.7,929.25 539.6,929.25 541.6,929.60 543.6,929.25 545.5,929.60 547.5,929.25 549.5,929.60 551.4,929.25 553.4,929.60 555.4,929.60 557.3,929.60 559.3,929.60 561.3,929.60 563.2,929.25 565.2,929.60 567.1,929.60 569.1,929.25 571.1,929.25 573.0,929.60 575.0,929.25 577.0,929.60 578.9,929.60 580.9,929.60 582.9,929.60 584.8,929.25 586.8,929.60 588.8,929.25 590.7,929.60 592.7,929.60 594.7,929.25 596.6,929.25 598.6,929.25 600.6,929.60 602.5,929.25 604.5,929.60 606.4,929.25 608.4,929.60 610.4,929.60 612.3,929.60 614.3,929.60 616.3,929.60 618.2,929.60 620.2,929.60 622.2,929.60 624.1,929.60 626.1,929.60 628.1,929.60 630.0,929.60 632.0,929.60 634.0,929.60 635.9,929.60 637.9,929.60 639.9,929.60 641.8,929.60 643.8,929.60 645.7,929.60 647.7,929.60 649.7,929.60 651.6,929.60 653.6,929.60 655.6,929.60 657.5,929.60 659.5,929.60 661.5,929.60 663.4,929.60 665.4,929.60 667.4,929.60 669.3,929.60 671.3,929.60 673.3,929.60 675.2,929.60 677.2,929.60 679.2,929.60 681.1,929.60 683.1,929.60 685.0,929.60 687.0,929.60 689.0,929.60 690.9,929.60 692.9,929.60 694.9,929.60 696.8,929.60 698.8,929.60 700.8,929.60 702.7,929.60 704.7,929.60 706.7,929.60 708.6,929.60 710.6,929.60 712.6,929.60 714.5,929.60 716.5,929.60 718.5,929.60 720.4,929.60 722.4,929.60 724.3,929.60 726.3,929.60 728.3,929.60 730.2,929.60 732.2,929.60 734.2,929.60 736.1,929.60 738.1,929.60 740.1,929.60 742.0,929.60 744.0,929.60 746.0,929.60 747.9,929.60 749.9,929.60 751.9,929.60 753.8,929.60 755.8,929.60 757.7,929.60 759.7,929.60 761.7,929.60 763.6,929.60 765.6,929.60 767.6,929.60 769.5,929.60 771.5,929.60 773.5,929.60 775.4,929.60 777.4,929.60 779.4,929.60 781.3,929.60 783.3,929.60 785.3,929.60 787.2,929.60 789.2,929.60 791.2,929.60 793.1,929.60 795.1,929.60 797.0,929.60 799.0,929.60 801.0,929.60 802.9,929.60 804.9,929.60 806.9,929.60 808.8,929.60 810.8,929.60 812.8,929.60 814.7,929.60 816.7,929.60 818.7,929.60 820.6,929.60 822.6,929.60 824.6,929.60 826.5,929.60 828.5,929.60 830.5,929.60 832.4,929.60 834.4,929.60 836.3,929.60 838.3,929.60 840.3,929.60 842.2,929.60 844.2,929.60 846.2,929.60 848.1,929.60 850.1,929.60 852.1,929.60 854.0,929.60 856.0,929.60 858.0,929.60 859.9,929.60 861.9,929.60 863.9,929.60 865.8,929.60 867.8,929.60 869.8,929.60 871.7,929.60 873.7,929.60 875.6,929.60 877.6,929.60 879.6,929.60 881.5,929.60 883.5,929.60 885.5,929.60 887.4,929.60 889.4,929.60 891.4,929.60 893.3,929.60 895.3,929.60 897.3,929.60 899.2,929.60 901.2,929.60 903.2,929.60 905.1,929.60 907.1,929.60 909.0,929.60 911.0,929.60 913.0,929.60 914.9,929.60 916.9,929.60 918.9,929.60 920.8,929.60 922.8,929.60 924.8,929.60 926.7,929.60 928.7,929.60 930.7,929.60 932.6,929.60 934.6,929.60 936.6,929.60 938.5,929.60 940.5,929.60 942.5,929.60 944.4,929.60 946.4,929.60 948.3,929.60 950.3,929.60 952.3,929.60 954.2,929.60 956.2,929.60 958.2,929.60 960.1,929.60 962.1,929.60 964.1,929.60 966.0,929.60 968.0,929.60 970.0,929.60 971.9,929.60 973.9,929.60 975.9,929.60 977.8,929.60 979.8,929.60 981.8,929.60 983.7,929.60 985.7,929.60 987.6,929.60 989.6,929.60 991.6,929.60 993.5,929.60 995.5,929.60 997.5,929.60 999.4,929.60 1001.4,929.60 1003.4,929.60 1005.3,929.60 1007.3,929.60 1009.3,929.60 1011.2,929.60 1013.2,929.60 1015.2,929.60 1017.1,929.60 1019.1,929.60 1021.1,929.60 1023.0,929.60 1025.0,929.60 1026.9,929.60 1028.9,929.60 1030.9,929.60 1032.8,929.60 1034.8,929.60 1036.8,929.60 1038.7,929.60 1040.7,929.60 1042.7,929.60 1044.6,929.60 1046.6,929.60 1048.6,929.60 1050.5,929.60 1052.5,929.60 1054.5,929.60 1056.4,929.60 1058.4,929.60 1060.4,929.60 1062.3,929.60 1064.3,929.60 1066.2,928.70 1068.2,928.70 1070.2,928.70 1072.1,931.10 1074.1,931.10 1076.1,931.10 1078.0,931.10 1080.0,931.10 1082.0,931.10 1083.9,931.10 1085.9,931.10 1087.9,931.10 1089.8,931.10 1091.8,931.10 1093.8,931.10 1095.7,931.10 1097.7,931.10 1099.6,931.10 1101.6,931.10 1103.6,931.10 1105.5,931.10 1107.5,931.10 1109.5,931.10 1111.4,931.10 1113.4,931.10 1115.4,931.10 1117.3,931.10 1119.3,931.10 1121.3,931.10 1123.2,931.10 1125.2,931.10 1127.2,931.10 1129.1,931.10 1131.1,931.10 1133.1,931.10 1135.0,931.10 1137.0,931.10 1138.9,931.10 1140.9,931.10 1142.9,931.10 1144.8,931.10 1146.8,931.10 1148.8,931.10 1150.7,931.10 1152.7,931.10 1154.7,931.10 1156.6,931.10 1158.6,931.10 1160.6,931.10 1162.5,931.10 1164.5,931.10 1166.5,931.10 1168.4,931.10 1170.4,931.10 1172.4,931.10 1174.3,931.10 1176.3,931.10 1178.2,931.10 1180.2,931.10 1182.2,931.10 1184.1,931.10 1186.1,931.10 1188.1,931.10 1190.0,931.10 1192.0,931.10 1194.0,931.10 1195.9,931.10 1197.9,931.10 1199.9,931.10 1201.8,931.10 1203.8,931.10 1205.8,931.10 1207.7,931.10 1209.7,931.10 1211.7,931.10 1213.6,931.10 1215.6,931.10 1217.5,931.10 1219.5,931.10 1221.5,931.10 1223.4,931.10 1225.4,931.10 1227.4,931.10 1229.3,931.10 1231.3,931.10" fill="none" stroke="#164166" stroke-width="1.1"/>
<polyline points="54.3,1020.60 56.3,1020.60 58.2,1020.60 60.2,1020.60 62.2,1020.60 64.1,1020.60 66.1,1020.60 68.1,1020.60 70.0,1020.60 72.0,1020.60 73.9,1020.60 75.9,1020.60 77.9,1020.60 79.8,1020.60 81.8,1020.60 83.8,1020.60 85.7,1020.60 87.7,1020.60 89.7,1020.60 91.6,1020.60 93.6,1020.60 95.6,1020.60 97.5,1020.60 99.5,1020.60 101.5,1020.60 103.4,1020.60 105.4,1020.60 107.4,1020.60 109.3,1020.60 111.3,1020.60 113.2,1020.60 115.2,1020.60 117.2,1020.60 119.1,1020.60 121.1,1020.60 123.1,1020.60 125.0,1020.60 127.0,1020.60 129.0,1020.60 130.9,1020.60 132.9,1020.60 134.9,1020.60 136.8,1020.60 138.8,1020.60 140.8,1020.60 142.7,1020.60 144.7,1020.60 146.7,1020.60 148.6,1020.60 150.6,1020.60 152.5,1020.60 154.5,1020.60 156.5,1019.82 158.4,1020.55 160.4,1020.60 162.4,1020.60 164.3,1020.60 166.3,1020.60 168.3,1020.60 170.2,1020.60 172.2,1020.60 174.2,1020.60 176.1,1020.60 178.1,1020.60 180.1,1020.60 182.0,1020.60 184.0,1020.60 186.0,1020.60 187.9,1020.60 189.9,1020.60 191.8,1020.60 193.8,1020.60 195.8,1020.60 197.7,1020.60 199.7,1020.60 201.7,1020.60 203.6,1020.60 205.6,1020.60 207.6,1020.60 209.5,1020.60 211.5,1020.60 213.5,1020.60 215.4,1020.60 217.4,1020.60 219.4,1020.60 221.3,1020.60 223.3,1020.60 225.2,1020.60 227.2,1020.60 229.2,1020.60 231.1,1020.60 233.1,1020.60 235.1,1020.60 237.0,1020.60 239.0,1020.60 241.0,1020.60 242.9,1020.60 244.9,1020.60 246.9,1017.69 248.8,1020.60 250.8,1020.33 252.8,1019.91 254.7,1020.60 256.7,1020.60 258.7,1020.60 260.6,1020.60 262.6,1020.60 264.5,1020.60 266.5,1020.60 268.5,1020.60 270.4,1020.60 272.4,1020.60 274.4,1020.60 276.3,1020.60 278.3,1020.60 280.3,1020.60 282.2,1020.60 284.2,1020.60 286.2,1020.60 288.1,1020.60 290.1,1020.60 292.1,1020.60 294.0,1020.60 296.0,1020.60 298.0,1020.60 299.9,1020.60 301.9,1020.60 303.8,1020.60 305.8,1020.60 307.8,1020.60 309.7,1020.60 311.7,1020.60 313.7,1020.60 315.6,1020.60 317.6,1020.60 319.6,1020.60 321.5,1020.60 323.5,1020.60 325.5,1020.60 327.4,1020.60 329.4,1020.60 331.4,1020.60 333.3,1020.60 335.3,1020.60 337.3,1020.60 339.2,1020.60 341.2,1020.60 343.1,1020.60 345.1,1020.60 347.1,1020.60 349.0,1020.60 351.0,1020.60 353.0,1020.60 354.9,1020.60 356.9,1020.60 358.9,1020.60 360.8,1020.60 362.8,1020.60 364.8,1020.60 366.7,1020.60 368.7,1020.60 370.7,1020.60 372.6,1020.60 374.6,1020.60 376.6,1020.60 378.5,1020.60 380.5,1020.60 382.4,1020.60 384.4,1020.60 386.4,1020.60 388.3,1020.60 390.3,1020.60 392.3,1020.60 394.2,1020.60 396.2,1020.60 398.2,1019.71 400.1,1020.60 402.1,1020.60 404.1,1020.60 406.0,1020.60 408.0,1019.61 410.0,1020.60 411.9,1020.60 413.9,1020.60 415.8,1020.60 417.8,1020.60 419.8,1020.60 421.7,1020.60 423.7,1020.60 425.7,1020.60 427.6,1020.49 429.6,1019.88 431.6,1020.60 433.5,1020.60 435.5,1020.60 437.5,1020.60 439.4,1020.60 441.4,1020.60 443.4,1020.60 445.3,1020.60 447.3,1020.60 449.3,1020.60 451.2,1020.60 453.2,1020.60 455.1,1020.60 457.1,1020.60 459.1,1020.60 461.0,1020.60 463.0,1020.60 465.0,1020.60 466.9,1020.60 468.9,1020.60 470.9,1020.60 472.8,1020.60 474.8,1020.60 476.8,1020.60 478.7,1020.60 480.7,1020.60 482.7,1020.60 484.6,1020.60 486.6,1020.60 488.6,1020.60 490.5,1020.60 492.5,1020.60 494.4,1020.60 496.4,1020.60 498.4,1020.60 500.3,1020.60 502.3,1020.60 504.3,1020.60 506.2,1020.60 508.2,1020.60 510.2,1020.60 512.1,1020.60 514.1,1020.60 516.1,1020.60 518.0,1020.60 520.0,1020.21 522.0,1020.16 523.9,1020.60 525.9,1020.34 527.9,1020.17 529.8,1020.60 531.8,1020.60 533.7,1020.60 535.7,1020.60 537.7,1020.60 539.6,1020.60 541.6,1020.60 543.6,1020.60 545.5,1020.60 547.5,1020.60 549.5,1020.60 551.4,1020.60 553.4,1020.60 555.4,1020.60 557.3,1020.60 559.3,1020.60 561.3,1020.60 563.2,1020.60 565.2,1020.60 567.1,1020.60 569.1,1020.60 571.1,1020.60 573.0,1020.60 575.0,1020.60 577.0,1020.60 578.9,1020.60 580.9,1020.60 582.9,1020.60 584.8,1020.60 586.8,1020.60 588.8,1020.60 590.7,1020.60 592.7,1020.60 594.7,1020.60 596.6,1020.60 598.6,1020.60 600.6,1020.60 602.5,1020.60 604.5,1020.60 606.4,1020.60 608.4,1020.60 610.4,1020.60 612.3,1020.60 614.3,1020.60 616.3,1020.60 618.2,1020.60 620.2,1020.60 622.2,1020.60 624.1,1020.60 626.1,1020.60 628.1,1020.60 630.0,1020.60 632.0,1020.60 634.0,1020.60 635.9,1020.60 637.9,1020.60 639.9,1020.60 641.8,1020.60 643.8,1020.60 645.7,1020.60 647.7,1020.60 649.7,1020.60 651.6,1020.60 653.6,1020.60 655.6,1020.60 657.5,1020.60 659.5,1020.60 661.5,1020.60 663.4,1020.60 665.4,1020.60 667.4,1020.60 669.3,1020.60 671.3,1020.60 673.3,1020.60 675.2,1020.02 677.2,1020.35 679.2,1020.60 681.1,1020.60 683.1,1020.60 685.0,1020.60 687.0,1020.60 689.0,1020.60 690.9,1020.60 692.9,1020.60 694.9,1020.60 696.8,1020.60 698.8,1020.60 700.8,1020.60 702.7,1020.60 704.7,1020.60 706.7,1020.60 708.6,1020.60 710.6,1020.60 712.6,1020.60 714.5,1020.60 716.5,1020.60 718.5,1020.60 720.4,1020.60 722.4,1020.60 724.3,1020.60 726.3,1020.60 728.3,1020.60 730.2,1020.60 732.2,1020.60 734.2,1020.60 736.1,1020.60 738.1,1020.60 740.1,1020.60 742.0,1020.60 744.0,1020.60 746.0,1020.60 747.9,1020.60 749.9,1020.60 751.9,1020.60 753.8,1020.60 755.8,1020.60 757.7,1020.60 759.7,1020.60 761.7,1020.60 763.6,1020.60 765.6,1020.60 767.6,1020.60 769.5,1020.60 771.5,1020.60 773.5,1020.60 775.4,1020.60 777.4,1020.60 779.4,1020.60 781.3,1020.60 783.3,1020.60 785.3,1020.60 787.2,1020.60 789.2,1020.60 791.2,1020.60 793.1,1020.60 795.1,1020.60 797.0,1020.60 799.0,1020.60 801.0,1020.60 802.9,1020.60 804.9,1020.60 806.9,1020.60 808.8,1020.60 810.8,1020.60 812.8,1020.60 814.7,1020.60 816.7,1020.60 818.7,1020.60 820.6,1020.60 822.6,1020.60 824.6,1020.60 826.5,1020.60 828.5,1020.60 830.5,1020.60 832.4,1020.60 834.4,1020.60 836.3,1020.60 838.3,1020.60 840.3,1020.60 842.2,1020.60 844.2,1020.60 846.2,1020.60 848.1,1020.60 850.1,1020.60 852.1,1019.36 854.0,1020.60 856.0,1020.60 858.0,1020.60 859.9,1020.60 861.9,1020.60 863.9,1020.60 865.8,1020.60 867.8,1020.60 869.8,1020.60 871.7,1020.60 873.7,1020.60 875.6,1020.60 877.6,1020.60 879.6,1020.60 881.5,1020.60 883.5,1020.60 885.5,1020.60 887.4,1020.60 889.4,1020.60 891.4,1020.60 893.3,1020.60 895.3,1020.60 897.3,1020.60 899.2,1020.60 901.2,1020.60 903.2,1020.60 905.1,1020.60 907.1,1020.60 909.0,1020.60 911.0,1020.60 913.0,1020.60 914.9,1020.60 916.9,1020.60 918.9,1020.60 920.8,1020.60 922.8,1020.60 924.8,1020.60 926.7,1020.60 928.7,1020.60 930.7,1020.60 932.6,1020.60 934.6,1020.60 936.6,1020.60 938.5,1020.60 940.5,1020.60 942.5,1020.60 944.4,1020.60 946.4,1020.60 948.3,1020.60 950.3,1020.60 952.3,1020.60 954.2,1020.60 956.2,1020.60 958.2,1020.60 960.1,1020.60 962.1,1020.60 964.1,1020.60 966.0,1020.60 968.0,1020.60 970.0,1020.60 971.9,1020.60 973.9,1020.60 975.9,1020.60 977.8,1020.60 979.8,1020.60 981.8,1020.60 983.7,1020.46 985.7,1020.05 987.6,1020.60 989.6,1019.71 991.6,1020.60 993.5,1020.60 995.5,1020.60 997.5,1020.60 999.4,1020.60 1001.4,1020.60 1003.4,1020.60 1005.3,1020.60 1007.3,1020.60 1009.3,1020.60 1011.2,1020.60 1013.2,1020.60 1015.2,1020.60 1017.1,1020.60 1019.1,1020.60 1021.1,1020.60 1023.0,1020.60 1025.0,1020.60 1026.9,1020.60 1028.9,1020.60 1030.9,1020.60 1032.8,1020.60 1034.8,1020.60 1036.8,1020.60 1038.7,1020.60 1040.7,1020.60 1042.7,1020.60 1044.6,1020.60 1046.6,1020.60 1048.6,1020.60 1050.5,1020.60 1052.5,1020.60 1054.5,1020.60 1056.4,1020.60 1058.4,1020.60 1060.4,1020.60 1062.3,1020.60 1064.3,1019.38 1066.2,1020.60 1068.2,1020.60 1070.2,1020.60 1072.1,1020.60 1074.1,1020.60 1076.1,1020.60 1078.0,1020.60 1080.0,1020.60 1082.0,1020.60 1083.9,1020.60 1085.9,1020.60 1087.9,1020.60 1089.8,1020.60 1091.8,1020.60 1093.8,1020.60 1095.7,1020.60 1097.7,1020.60 1099.6,1020.60 1101.6,1020.60 1103.6,1020.60 1105.5,1020.60 1107.5,1020.60 1109.5,1020.60 1111.4,1019.97 1113.4,1020.54 1115.4,1020.60 1117.3,1020.60 1119.3,1020.60 1121.3,1020.60 1123.2,1020.60 1125.2,1020.60 1127.2,1020.60 1129.1,1020.60 1131.1,1020.60 1133.1,1020.60 1135.0,1020.19 1137.0,1020.19 1138.9,1020.60 1140.9,1020.60 1142.9,1020.60 1144.8,1020.60 1146.8,1020.35 1148.8,1020.02 1150.7,1020.60 1152.7,1020.60 1154.7,1020.60 1156.6,1020.60 1158.6,1020.60 1160.6,1020.60 1162.5,1020.60 1164.5,1020.60 1166.5,1020.60 1168.4,1020.60 1170.4,1020.60 1172.4,1020.60 1174.3,1020.60 1176.3,1020.08 1178.2,1020.43 1180.2,1020.60 1182.2,1020.60 1184.1,1020.60 1186.1,1020.60 1188.1,1020.60 1190.0,1020.60 1192.0,1020.60 1194.0,1020.60 1195.9,1020.60 1197.9,1020.60 1199.9,1020.60 1201.8,1020.60 1203.8,1020.60 1205.8,1020.60 1207.7,1020.60 1209.7,1020.60 1211.7,1020.60 1213.6,1020.60 1215.6,1020.60 1217.5,1020.60 1219.5,1020.60 1221.5,1020.60 1223.4,1020.60 1225.4,1020.60 1227.4,1020.60 1229.3,1020.60 1231.3,1020.60" fill="none" stroke="#f2cc0c" stroke-width="1" stroke-opacity=".9"/>
<rect x="54.3" y="910.9" width="1177.00" height="1.2" fill="#bf1b00"/>
<rect x="54.3" y="925.9" width="1177.00" height="1.2" fill="#9aa968"/>
<rect x="13.2" y="1079.1" width="14" height="4" rx="2" fill="#e0f9d7"/>
<rect x="104.1" y="1079.1" width="14" height="4" rx="2" fill="#f2cc0c"/>
<rect x="197.2" y="1079.1" width="14" height="4" rx="2" fill="#052b51"/>
<rect x="347.4" y="1079.1" width="14" height="4" rx="2" fill="#7eb26d"/>
<rect x="436" y="1079.1" width="14" height="4" rx="2" fill="#bf1b00"/>
<g transform="translate(0.0 0)"><g filter="url(#tf)">
<path d="M52.2 138.4L52.4 135.8Q52.8 133.4 55 132.8L58.2 132Q60.6 127.6 63.8 124.9Q65.5 123.6 66.3 125.1Q67.4 128.2 67.3 132L74.3 132Q75.2 132.1 75.2 133L75.3 138.8Q75.2 140.2 74 140.2L53.5 140.2Q52.1 140.2 52.2 138.4Z" fill="url(#tb)"/>
<path d="M59.8 131.7Q61.8 128.2 64.3 126Q65.3 125.3 65.7 126.3Q66.4 128.8 66.4 131.7Z" fill="url(#tw)"/>
<path d="M52.6 134.6Q60 133.2 75 133.6" stroke="#6cc0bd" stroke-width=".8" stroke-opacity=".55" fill="none"/>
<path d="M52.3 137.4h23v1.6h-23z" fill="#256c70" fill-opacity=".5"/>
<path d="M53.7 140.2a3.2 3.2 0 0 1 6.4 0zM67.3 140.2a3.2 3.2 0 0 1 6.4 0z" fill="#1d575c"/>
<circle cx="56.9" cy="139.9" r="2.35" fill="#38383b"/><circle cx="56.9" cy="139.9" r="1.35" fill="#a9a9ac"/><circle cx="56.9" cy="139.9" r=".5" fill="#808084"/>
<circle cx="70.6" cy="139.9" r="2.35" fill="#38383b"/><circle cx="70.6" cy="139.9" r="1.35" fill="#a9a9ac"/><circle cx="70.6" cy="139.9" r=".5" fill="#808084"/>
<ellipse cx="54.3" cy="134" rx=".95" ry=".7" fill="#e6f1f1" transform="rotate(-35 54.3 134)"/>
<rect x="74" y="132.7" width="1.1" height="1.6" rx=".4" fill="#6b1320"/>
<path d="M62.2 127.8L61.2 131.6" stroke="#2f7f8c" stroke-width=".45" stroke-opacity=".8"/>
</g>
<g filter="url(#pf)">
<path d="M99.5 123.9h3.6M100.5 141.4h4.2M102.5 139.9h2.2" stroke="#7f8da3" stroke-width=".7" stroke-opacity=".75" stroke-linecap="round"/>
<circle cx="94.6" cy="126.9" r="4.9" fill="url(#pg)"/>
<circle cx="99" cy="127.6" r="3.6" fill="url(#pg)"/>
<circle cx="101.2" cy="131.6" r="4.2" fill="url(#pg)"/>
<circle cx="92.4" cy="133" r="4.4" fill="url(#pg)"/>
<circle cx="94.6" cy="138.4" r="4.7" fill="url(#pg)"/>
<circle cx="99.8" cy="137.6" r="4" fill="url(#pg)"/>
<circle cx="90.6" cy="137.6" r="2.4" fill="url(#pg)"/>
<circle cx="96.8" cy="132.8" r="4.6" fill="#cddcef"/>
<circle cx="93.8" cy="126.2" r="2.4" fill="#e0ebf8" fill-opacity=".75"/>
<circle cx="85.5" cy="125.9" r="1.25" fill="#c0d4ec"/>
<path d="M85.4 127.2Q85.2 128.8 83.4 130" stroke="#a5b8d1" stroke-width=".7" fill="none" stroke-linecap="round"/>
<ellipse cx="86.6" cy="131.4" rx="3.2" ry=".8" fill="#a9bcd5" fill-opacity=".75"/>
<ellipse cx="86.4" cy="134.8" rx="3.4" ry=".7" fill="#98abc5" fill-opacity=".65"/>
<ellipse cx="85.8" cy="137.3" rx=".9" ry="1.2" fill="#b4c7df" transform="rotate(-35 85.8 137.3)"/>
</g>
</g>
<g transform="translate(148.0 0)"><g filter="url(#tf)">
<path d="M52.2 138.4L52.4 135.8Q52.8 133.4 55 132.8L58.2 132Q60.6 127.6 63.8 124.9Q65.5 123.6 66.3 125.1Q67.4 128.2 67.3 132L74.3 132Q75.2 132.1 75.2 133L75.3 138.8Q75.2 140.2 74 140.2L53.5 140.2Q52.1 140.2 52.2 138.4Z" fill="url(#tb)"/>
<path d="M59.8 131.7Q61.8 128.2 64.3 126Q65.3 125.3 65.7 126.3Q66.4 128.8 66.4 131.7Z" fill="url(#tw)"/>
<path d="M52.6 134.6Q60 133.2 75 133.6" stroke="#6cc0bd" stroke-width=".8" stroke-opacity=".55" fill="none"/>
<path d="M52.3 137.4h23v1.6h-23z" fill="#256c70" fill-opacity=".5"/>
<path d="M53.7 140.2a3.2 3.2 0 0 1 6.4 0zM67.3 140.2a3.2 3.2 0 0 1 6.4 0z" fill="#1d575c"/>
<circle cx="56.9" cy="139.9" r="2.35" fill="#38383b"/><circle cx="56.9" cy="139.9" r="1.35" fill="#a9a9ac"/><circle cx="56.9" cy="139.9" r=".5" fill="#808084"/>
<circle cx="70.6" cy="139.9" r="2.35" fill="#38383b"/><circle cx="70.6" cy="139.9" r="1.35" fill="#a9a9ac"/><circle cx="70.6" cy="139.9" r=".5" fill="#808084"/>
<ellipse cx="54.3" cy="134" rx=".95" ry=".7" fill="#e6f1f1" transform="rotate(-35 54.3 134)"/>
<rect x="74" y="132.7" width="1.1" height="1.6" rx=".4" fill="#6b1320"/>
<path d="M62.2 127.8L61.2 131.6" stroke="#2f7f8c" stroke-width=".45" stroke-opacity=".8"/>
</g>
<g filter="url(#pf)">
<path d="M99.5 123.9h3.6M100.5 141.4h4.2M102.5 139.9h2.2" stroke="#7f8da3" stroke-width=".7" stroke-opacity=".75" stroke-linecap="round"/>
<circle cx="94.6" cy="126.9" r="4.9" fill="url(#pg)"/>
<circle cx="99" cy="127.6" r="3.6" fill="url(#pg)"/>
<circle cx="101.2" cy="131.6" r="4.2" fill="url(#pg)"/>
<circle cx="92.4" cy="133" r="4.4" fill="url(#pg)"/>
<circle cx="94.6" cy="138.4" r="4.7" fill="url(#pg)"/>
<circle cx="99.8" cy="137.6" r="4" fill="url(#pg)"/>
<circle cx="90.6" cy="137.6" r="2.4" fill="url(#pg)"/>
<circle cx="96.8" cy="132.8" r="4.6" fill="#cddcef"/>
<circle cx="93.8" cy="126.2" r="2.4" fill="#e0ebf8" fill-opacity=".75"/>
<circle cx="85.5" cy="125.9" r="1.25" fill="#c0d4ec"/>
<path d="M85.4 127.2Q85.2 128.8 83.4 130" stroke="#a5b8d1" stroke-width=".7" fill="none" stroke-linecap="round"/>
<ellipse cx="86.6" cy="131.4" rx="3.2" ry=".8" fill="#a9bcd5" fill-opacity=".75"/>
<ellipse cx="86.4" cy="134.8" rx="3.4" ry=".7" fill="#98abc5" fill-opacity=".65"/>
<ellipse cx="85.8" cy="137.3" rx=".9" ry="1.2" fill="#b4c7df" transform="rotate(-35 85.8 137.3)"/>
</g>
</g>
<g font-family="Liberation Sans, sans-serif" fill="#ccccdc" stroke-linejoin="round" style="white-space:pre">
<text x="9.30" y="31" font-size="14.7" letter-spacing="-0.050" stroke="#ccccdc" stroke-width="0.65">Running</text>
<text x="26.20" y="172" font-size="14.3" letter-spacing="-0.367" stroke="#ccccdc" stroke-width="0.25">192.168.1.132:83</text>
<text x="174.20" y="172" font-size="14.3" letter-spacing="-0.367" stroke="#ccccdc" stroke-width="0.25">192.168.1.133:83</text>
<text x="323.60" y="31" font-size="14.7" letter-spacing="0.130" stroke="#ccccdc" stroke-width="0.65">Uptime</text>
<text x="468.47" y="180" font-size="12.5" stroke="#ccccdc" stroke-width="0.25">16:00</text>
<text x="535.02" y="180" font-size="12.5" stroke="#ccccdc" stroke-width="0.25">18:00</text>
<text x="601.58" y="180" font-size="12.5" stroke="#ccccdc" stroke-width="0.25">20:00</text>
<text x="668.12" y="180" font-size="12.5" stroke="#ccccdc" stroke-width="0.25">22:00</text>
<text x="734.67" y="180" font-size="12.5" stroke="#ccccdc" stroke-width="0.25">00:00</text>
<text x="801.23" y="180" font-size="12.5" stroke="#ccccdc" stroke-width="0.25">02:00</text>
<text x="867.77" y="180" font-size="12.5" stroke="#ccccdc" stroke-width="0.25">04:00</text>
<text x="934.33" y="180" font-size="12.5" stroke="#ccccdc" stroke-width="0.25">06:00</text>
<text x="1000.88" y="180" font-size="12.5" stroke="#ccccdc" stroke-width="0.25">08:00</text>
<text x="1067.42" y="180" font-size="12.5" stroke="#ccccdc" stroke-width="0.25">10:00</text>
<text x="1133.98" y="180" font-size="12.5" stroke="#ccccdc" stroke-width="0.25">12:00</text>
<text x="1200.52" y="180" font-size="12.5" stroke="#ccccdc" stroke-width="0.25">14:00</text>
<text x="328.00" y="85" font-size="12.1" letter-spacing="-0.347" stroke="#ccccdc" stroke-width="0.25">192.168.1.132:83</text>
<text x="328.00" y="142" font-size="12.1" letter-spacing="-0.347" stroke="#ccccdc" stroke-width="0.25">192.168.1.133:83</text>
<text x="28.40" y="220" font-size="16.8" letter-spacing="0.198" stroke="#ccccdc" stroke-width="0.7">Quick CPU / Mem / Disk</text>
<text x="28.40" y="562" font-size="16.8" letter-spacing="0.217" stroke="#ccccdc" stroke-width="0.7">Basic CPU / Mem / Net / Disk</text>
<text x="9.60" y="259" font-size="14.7" letter-spacing="0.057" stroke="#ccccdc" stroke-width="0.65">Pressure</text>
<text x="13.45" y="295" font-size="12.1" stroke="#ccccdc" stroke-width="0.45">CPU</text>
<text x="753.90" y="299" font-size="26.3" letter-spacing="-0.400" fill="#73bf69" stroke="#73bf69" stroke-width="0.15">0.3</text>
<text x="791.62" y="299" font-size="18.8" letter-spacing="-0.400" fill="#73bf69" stroke="#73bf69" stroke-width="0.15">%</text>
<text x="11.95" y="329" font-size="12.1" stroke="#ccccdc" stroke-width="0.45">Mem</text>
<text x="753.90" y="334" font-size="26.3" letter-spacing="-0.400" fill="#73bf69" stroke="#73bf69" stroke-width="0.15">0.0</text>
<text x="791.62" y="334" font-size="18.8" letter-spacing="-0.400" fill="#73bf69" stroke="#73bf69" stroke-width="0.15">%</text>
<text x="22.70" y="364" font-size="12.1" stroke="#ccccdc" stroke-width="0.45">I/O</text>
<text x="753.90" y="369" font-size="26.3" letter-spacing="-0.400" fill="#73bf69" stroke="#73bf69" stroke-width="0.15">0.2</text>
<text x="791.62" y="369" font-size="18.8" letter-spacing="-0.400" fill="#73bf69" stroke="#73bf69" stroke-width="0.15">%</text>
<text x="846.40" y="259" font-size="14.7" letter-spacing="-0.100" stroke="#ccccdc" stroke-width="0.65">CPU Cores</text>
<text x="1056.40" y="259" font-size="14.7" letter-spacing="0.169" stroke="#ccccdc" stroke-width="0.65">RAM Total</text>
<text x="846.40" y="335" font-size="14.7" letter-spacing="0.009" stroke="#ccccdc" stroke-width="0.65">RootFS Total</text>
<text x="1056.40" y="335" font-size="14.7" letter-spacing="0.230" stroke="#ccccdc" stroke-width="0.65">Uptime</text>
<text x="932.90" y="292" font-size="15.4" letter-spacing="0.100" stroke="#ccccdc" stroke-width="0.65">8</text>
<text x="1125.53" y="292" font-size="15.4" letter-spacing="-0.400" stroke="#ccccdc" stroke-width="0.65">15</text>
<text x="1146.20" y="292" font-size="13" letter-spacing="0.125" stroke="#ccccdc" stroke-width="0.5">GiB</text>
<text x="910.00" y="368" font-size="15.4" letter-spacing="1.025" stroke="#ccccdc" stroke-width="0.65">468</text>
<text x="943.00" y="368" font-size="13" letter-spacing="0.125" stroke="#ccccdc" stroke-width="0.5">GiB</text>
<text x="1113.75" y="368" font-size="15.4" letter-spacing="-0.400" stroke="#ccccdc" stroke-width="0.65">1.7</text>
<text x="1139.05" y="368" font-size="13" letter-spacing="1.050" stroke="#ccccdc" stroke-width="0.5">weeks</text>
<text x="9.40" y="411" font-size="14.7" letter-spacing="0.043" stroke="#ccccdc" stroke-width="0.65">Sys Load</text>
<text x="323.40" y="411" font-size="14.7" letter-spacing="-0.164" stroke="#ccccdc" stroke-width="0.65">CPU Busy</text>
<text x="637.40" y="411" font-size="14.7" letter-spacing="-0.036" stroke="#ccccdc" stroke-width="0.65">RAM Used</text>
<text x="951.40" y="411" font-size="14.7" letter-spacing="-0.168" stroke="#ccccdc" stroke-width="0.65">Root FS Used</text>
<text x="126.00" y="513" font-size="23.4" letter-spacing="-0.300" fill="rgb(50,172,45)" stroke="rgb(50,172,45)" stroke-width="0.15">2.3%</text>
<text x="440.00" y="513" font-size="23.4" letter-spacing="-0.233" fill="rgb(50,172,45)" stroke="rgb(50,172,45)" stroke-width="0.15">3.4%</text>
<text x="753.70" y="511" font-size="19" letter-spacing="0.137" fill="rgb(50,172,45)" stroke="rgb(50,172,45)" stroke-width="0.15">25.0%</text>
<text x="1067.30" y="511" font-size="19" letter-spacing="0.213" fill="rgb(50,172,45)" stroke="rgb(50,172,45)" stroke-width="0.15">63.2%</text>
<text x="9.40" y="601" font-size="14.7" letter-spacing="-0.169" stroke="#ccccdc" stroke-width="0.65">CPU Basic</text>
<text x="9.40" y="867" font-size="14.7" letter-spacing="0.245" stroke="#ccccdc" stroke-width="0.65">Memory Basic</text>
<text x="61.88" y="794" font-size="12.5" stroke="#ccccdc" stroke-width="0.25">15:00</text>
<text x="111.05" y="794" font-size="12.5" stroke="#ccccdc" stroke-width="0.25">16:00</text>
<text x="160.21" y="794" font-size="12.5" stroke="#ccccdc" stroke-width="0.25">17:00</text>
<text x="209.38" y="794" font-size="12.5" stroke="#ccccdc" stroke-width="0.25">18:00</text>
<text x="258.56" y="794" font-size="12.5" stroke="#ccccdc" stroke-width="0.25">19:00</text>
<text x="307.73" y="794" font-size="12.5" stroke="#ccccdc" stroke-width="0.25">20:00</text>
<text x="356.89" y="794" font-size="12.5" stroke="#ccccdc" stroke-width="0.25">21:00</text>
<text x="406.06" y="794" font-size="12.5" stroke="#ccccdc" stroke-width="0.25">22:00</text>
<text x="455.24" y="794" font-size="12.5" stroke="#ccccdc" stroke-width="0.25">23:00</text>
<text x="504.41" y="794" font-size="12.5" stroke="#ccccdc" stroke-width="0.25">00:00</text>
<text x="553.58" y="794" font-size="12.5" stroke="#ccccdc" stroke-width="0.25">01:00</text>
<text x="602.75" y="794" font-size="12.5" stroke="#ccccdc" stroke-width="0.25">02:00</text>
<text x="651.91" y="794" font-size="12.5" stroke="#ccccdc" stroke-width="0.25">03:00</text>
<text x="701.09" y="794" font-size="12.5" stroke="#ccccdc" stroke-width="0.25">04:00</text>
<text x="750.25" y="794" font-size="12.5" stroke="#ccccdc" stroke-width="0.25">05:00</text>
<text x="799.43" y="794" font-size="12.5" stroke="#ccccdc" stroke-width="0.25">06:00</text>
<text x="848.60" y="794" font-size="12.5" stroke="#ccccdc" stroke-width="0.25">07:00</text>
<text x="897.76" y="794" font-size="12.5" stroke="#ccccdc" stroke-width="0.25">08:00</text>
<text x="946.94" y="794" font-size="12.5" stroke="#ccccdc" stroke-width="0.25">09:00</text>
<text x="996.11" y="794" font-size="12.5" stroke="#ccccdc" stroke-width="0.25">10:00</text>
<text x="1045.78" y="794" font-size="12.5" stroke="#ccccdc" stroke-width="0.25">11:00</text>
<text x="1094.44" y="794" font-size="12.5" stroke="#ccccdc" stroke-width="0.25">12:00</text>
<text x="1143.62" y="794" font-size="12.5" stroke="#ccccdc" stroke-width="0.25">13:00</text>
<text x="1192.79" y="794" font-size="12.5" stroke="#ccccdc" stroke-width="0.25">14:00</text>
<text x="26.10" y="779" font-size="12.5" stroke="#ccccdc" stroke-width="0.25">0%</text>
<text x="19.10" y="750" font-size="12.5" stroke="#ccccdc" stroke-width="0.25">20%</text>
<text x="19.10" y="720" font-size="12.5" stroke="#ccccdc" stroke-width="0.25">40%</text>
<text x="19.10" y="691" font-size="12.5" stroke="#ccccdc" stroke-width="0.25">60%</text>
<text x="19.10" y="661" font-size="12.5" stroke="#ccccdc" stroke-width="0.25">80%</text>
<text x="12.10" y="632" font-size="12.5" stroke="#ccccdc" stroke-width="0.25">100%</text>
<text x="35.90" y="819" font-size="12.5" letter-spacing="0.020" stroke="#ccccdc" stroke-width="0.25">Busy System</text>
<text x="142.70" y="819" font-size="12.5" letter-spacing="0.044" stroke="#ccccdc" stroke-width="0.25">Busy User</text>
<text x="234.10" y="819" font-size="12.5" letter-spacing="0.110" stroke="#ccccdc" stroke-width="0.25">Busy Iowait</text>
<text x="332.50" y="819" font-size="12.5" letter-spacing="-0.219" stroke="#ccccdc" stroke-width="0.25">Busy IRQs</text>
<text x="423.70" y="819" font-size="12.5" letter-spacing="0.044" stroke="#ccccdc" stroke-width="0.25">Busy Other</text>
<text x="520.10" y="819" font-size="12.5" letter-spacing="-0.150" stroke="#ccccdc" stroke-width="0.25">Idle</text>
<text x="66.17" y="1060" font-size="12.5" stroke="#ccccdc" stroke-width="0.25">15:00</text>
<text x="115.21" y="1060" font-size="12.5" stroke="#ccccdc" stroke-width="0.25">16:00</text>
<text x="164.25" y="1060" font-size="12.5" stroke="#ccccdc" stroke-width="0.25">17:00</text>
<text x="213.29" y="1060" font-size="12.5" stroke="#ccccdc" stroke-width="0.25">18:00</text>
<text x="262.33" y="1060" font-size="12.5" stroke="#ccccdc" stroke-width="0.25">19:00</text>
<text x="311.37" y="1060" font-size="12.5" stroke="#ccccdc" stroke-width="0.25">20:00</text>
<text x="360.42" y="1060" font-size="12.5" stroke="#ccccdc" stroke-width="0.25">21:00</text>
<text x="409.45" y="1060" font-size="12.5" stroke="#ccccdc" stroke-width="0.25">22:00</text>
<text x="458.49" y="1060" font-size="12.5" stroke="#ccccdc" stroke-width="0.25">23:00</text>
<text x="507.54" y="1060" font-size="12.5" stroke="#ccccdc" stroke-width="0.25">00:00</text>
<text x="556.58" y="1060" font-size="12.5" stroke="#ccccdc" stroke-width="0.25">01:00</text>
<text x="605.62" y="1060" font-size="12.5" stroke="#ccccdc" stroke-width="0.25">02:00</text>
<text x="654.66" y="1060" font-size="12.5" stroke="#ccccdc" stroke-width="0.25">03:00</text>
<text x="703.70" y="1060" font-size="12.5" stroke="#ccccdc" stroke-width="0.25">04:00</text>
<text x="752.74" y="1060" font-size="12.5" stroke="#ccccdc" stroke-width="0.25">05:00</text>
<text x="801.78" y="1060" font-size="12.5" stroke="#ccccdc" stroke-width="0.25">06:00</text>
<text x="850.82" y="1060" font-size="12.5" stroke="#ccccdc" stroke-width="0.25">07:00</text>
<text x="899.86" y="1060" font-size="12.5" stroke="#ccccdc" stroke-width="0.25">08:00</text>
<text x="948.90" y="1060" font-size="12.5" stroke="#ccccdc" stroke-width="0.25">09:00</text>
<text x="997.94" y="1060" font-size="12.5" stroke="#ccccdc" stroke-width="0.25">10:00</text>
<text x="1047.47" y="1060" font-size="12.5" stroke="#ccccdc" stroke-width="0.25">11:00</text>
<text x="1096.01" y="1060" font-size="12.5" stroke="#ccccdc" stroke-width="0.25">12:00</text>
<text x="1145.05" y="1060" font-size="12.5" stroke="#ccccdc" stroke-width="0.25">13:00</text>
<text x="1194.10" y="1060" font-size="12.5" stroke="#ccccdc" stroke-width="0.25">14:00</text>
<text x="30.75" y="1045" font-size="12.5" letter-spacing="-0.400" stroke="#ccccdc" stroke-width="0.25">0 B</text>
<text x="19.05" y="1030" font-size="12.5" letter-spacing="-0.400" stroke="#ccccdc" stroke-width="0.25">2 GiB</text>
<text x="19.05" y="1015" font-size="12.5" letter-spacing="-0.400" stroke="#ccccdc" stroke-width="0.25">4 GiB</text>
<text x="19.05" y="1000" font-size="12.5" letter-spacing="-0.400" stroke="#ccccdc" stroke-width="0.25">6 GiB</text>
<text x="19.05" y="985" font-size="12.5" letter-spacing="-0.400" stroke="#ccccdc" stroke-width="0.25">8 GiB</text>
<text x="12.45" y="970" font-size="12.5" letter-spacing="-0.400" stroke="#ccccdc" stroke-width="0.25">10 GiB</text>
<text x="12.45" y="955" font-size="12.5" letter-spacing="-0.400" stroke="#ccccdc" stroke-width="0.25">12 GiB</text>
<text x="12.45" y="940" font-size="12.5" letter-spacing="-0.400" stroke="#ccccdc" stroke-width="0.25">14 GiB</text>
<text x="12.45" y="925" font-size="12.5" letter-spacing="-0.400" stroke="#ccccdc" stroke-width="0.25">16 GiB</text>
<text x="12.45" y="910" font-size="12.5" letter-spacing="-0.400" stroke="#ccccdc" stroke-width="0.25">18 GiB</text>
<text x="35.90" y="1085" font-size="12.5" letter-spacing="0.013" stroke="#ccccdc" stroke-width="0.25">RAM Total</text>
<text x="126.70" y="1085" font-size="12.5" letter-spacing="-0.157" stroke="#ccccdc" stroke-width="0.25">RAM Used</text>
<text x="219.40" y="1085" font-size="12.5" letter-spacing="0.132" stroke="#ccccdc" stroke-width="0.25">RAM Cache + Buffer</text>
<text x="369.60" y="1085" font-size="12.5" letter-spacing="-0.300" stroke="#ccccdc" stroke-width="0.25">RAM Free</text>
<text x="458.20" y="1085" font-size="12.5" letter-spacing="-0.169" stroke="#ccccdc" stroke-width="0.25">SWAP Used</text>
</g>
</svg>
<svg class="a" style="left:85px;top:246px" width="16" height="16" viewBox="0 0 16 16"><circle cx="8" cy="8" r="6.1" fill="none" stroke="#9293a0" stroke-width="1.3"/><rect x="7.3" y="7.2" width="1.4" height="3.8" rx=".4" fill="#9697a4"/><circle cx="8" cy="5.4" r=".9" fill="#9697a4"/></svg>
<svg class="a" style="left:936px;top:246px" width="16" height="16" viewBox="0 0 16 16"><circle cx="8" cy="8" r="6.1" fill="none" stroke="#9293a0" stroke-width="1.3"/><rect x="7.3" y="7.2" width="1.4" height="3.8" rx=".4" fill="#9697a4"/><circle cx="8" cy="5.4" r=".9" fill="#9697a4"/></svg>
<svg class="a" style="left:1142px;top:246px" width="16" height="16" viewBox="0 0 16 16"><circle cx="8" cy="8" r="6.1" fill="none" stroke="#9293a0" stroke-width="1.3"/><rect x="7.3" y="7.2" width="1.4" height="3.8" rx=".4" fill="#9697a4"/><circle cx="8" cy="5.4" r=".9" fill="#9697a4"/></svg>
<svg class="a" style="left:948px;top:322px" width="16" height="16" viewBox="0 0 16 16"><circle cx="8" cy="8" r="6.1" fill="none" stroke="#9293a0" stroke-width="1.3"/><rect x="7.3" y="7.2" width="1.4" height="3.8" rx=".4" fill="#9697a4"/><circle cx="8" cy="5.4" r=".9" fill="#9697a4"/></svg>
<svg class="a" style="left:1121px;top:322px" width="16" height="16" viewBox="0 0 16 16"><circle cx="8" cy="8" r="6.1" fill="none" stroke="#9293a0" stroke-width="1.3"/><rect x="7.3" y="7.2" width="1.4" height="3.8" rx=".4" fill="#9697a4"/><circle cx="8" cy="5.4" r=".9" fill="#9697a4"/></svg>
<svg class="a" style="left:88px;top:398px" width="16" height="16" viewBox="0 0 16 16"><circle cx="8" cy="8" r="6.1" fill="none" stroke="#9293a0" stroke-width="1.3"/><rect x="7.3" y="7.2" width="1.4" height="3.8" rx=".4" fill="#9697a4"/><circle cx="8" cy="5.4" r=".9" fill="#9697a4"/></svg>
<svg class="a" style="left:407px;top:398px" width="16" height="16" viewBox="0 0 16 16"><circle cx="8" cy="8" r="6.1" fill="none" stroke="#9293a0" stroke-width="1.3"/><rect x="7.3" y="7.2" width="1.4" height="3.8" rx=".4" fill="#9697a4"/><circle cx="8" cy="5.4" r=".9" fill="#9697a4"/></svg>
<svg class="a" style="left:724px;top:398px" width="16" height="16" viewBox="0 0 16 16"><circle cx="8" cy="8" r="6.1" fill="none" stroke="#9293a0" stroke-width="1.3"/><rect x="7.3" y="7.2" width="1.4" height="3.8" rx=".4" fill="#9697a4"/><circle cx="8" cy="5.4" r=".9" fill="#9697a4"/></svg>
<svg class="a" style="left:1059px;top:398px" width="16" height="16" viewBox="0 0 16 16"><circle cx="8" cy="8" r="6.1" fill="none" stroke="#9293a0" stroke-width="1.3"/><rect x="7.3" y="7.2" width="1.4" height="3.8" rx=".4" fill="#9697a4"/><circle cx="8" cy="5.4" r=".9" fill="#9697a4"/></svg>
<svg class="a" style="left:96px;top:588px" width="16" height="16" viewBox="0 0 16 16"><circle cx="8" cy="8" r="6.1" fill="none" stroke="#9293a0" stroke-width="1.3"/><rect x="7.3" y="7.2" width="1.4" height="3.8" rx=".4" fill="#9697a4"/><circle cx="8" cy="5.4" r=".9" fill="#9697a4"/></svg>
<svg class="a" style="left:122px;top:854px" width="16" height="16" viewBox="0 0 16 16"><circle cx="8" cy="8" r="6.1" fill="none" stroke="#9293a0" stroke-width="1.3"/><rect x="7.3" y="7.2" width="1.4" height="3.8" rx=".4" fill="#9697a4"/><circle cx="8" cy="5.4" r=".9" fill="#9697a4"/></svg>
</div>
</body></html>
